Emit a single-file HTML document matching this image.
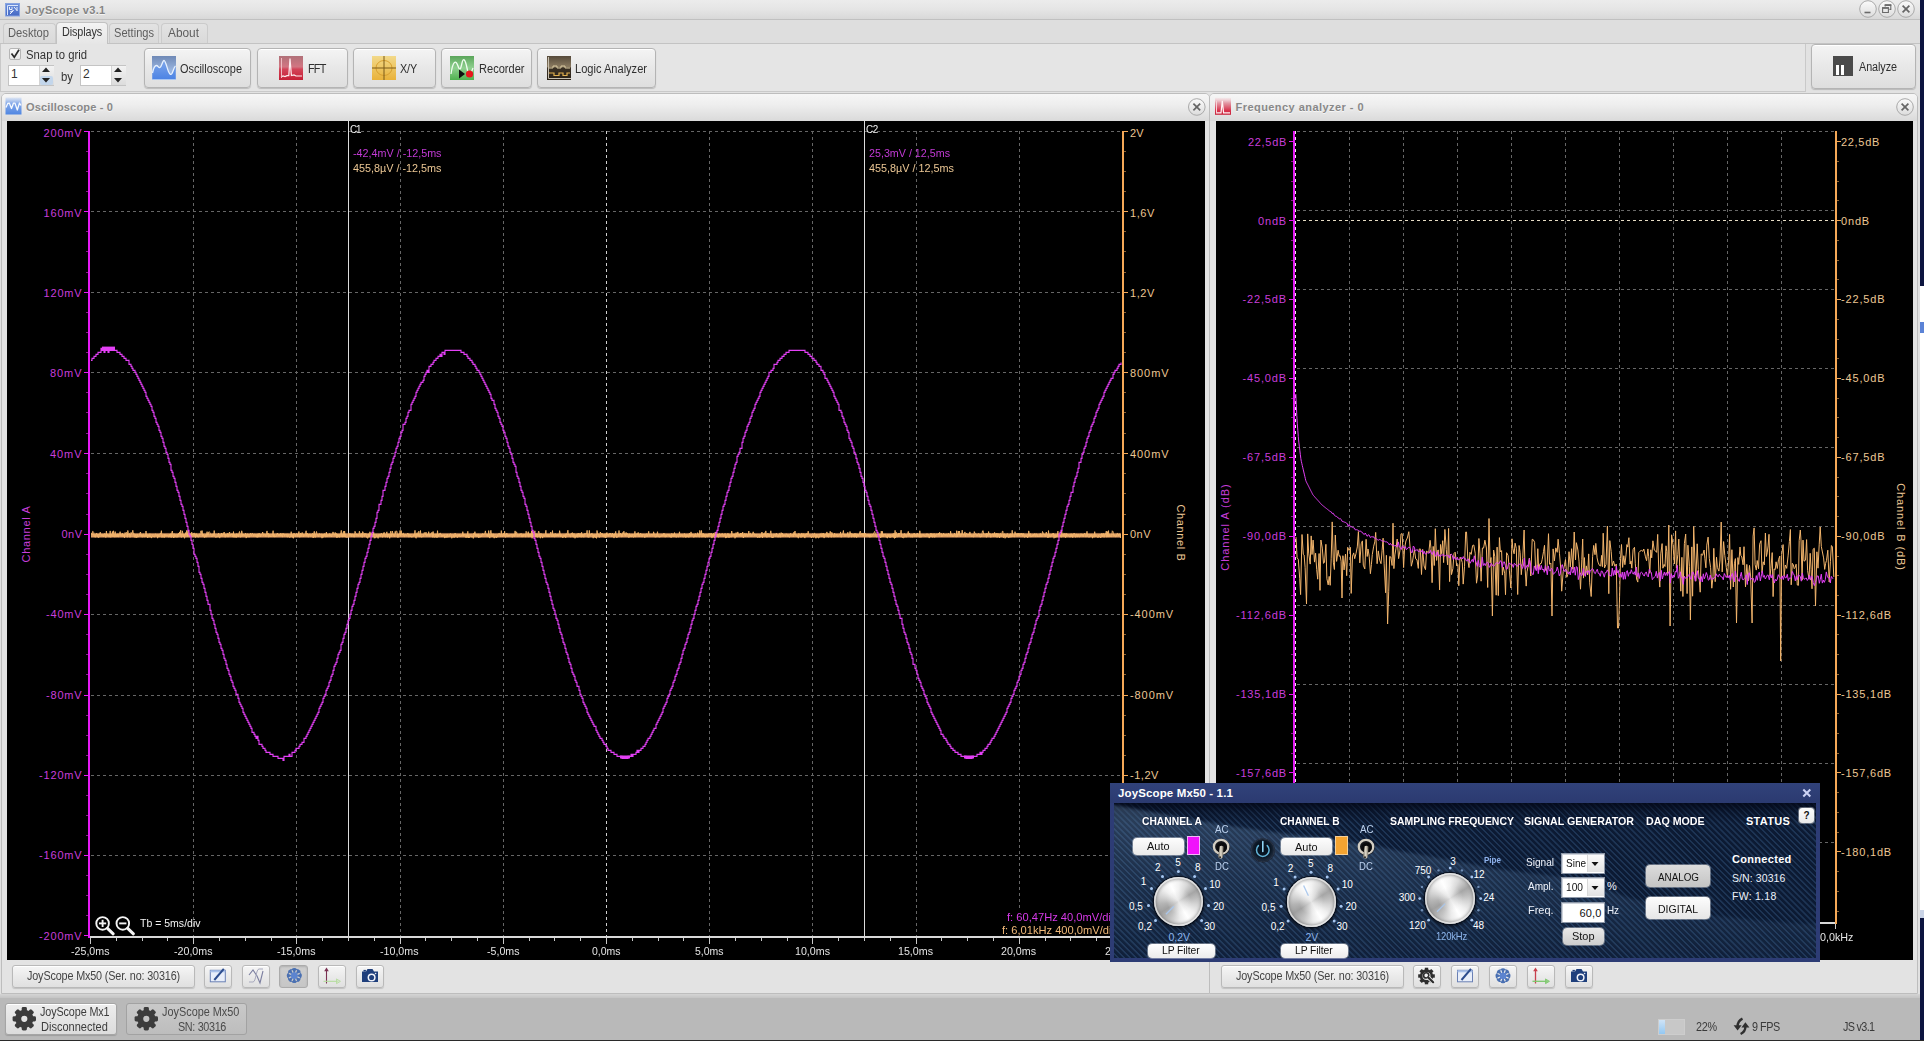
<!DOCTYPE html><html><head><meta charset="utf-8"><title>JoyScope v3.1</title><style>
html,body{margin:0;padding:0;}
body{width:1924px;height:1041px;overflow:hidden;background:#e2e2e2;font-family:"Liberation Sans",sans-serif;position:relative;}
.t{position:absolute;white-space:nowrap;font-family:"Liberation Sans",sans-serif;}
.btn{position:absolute;box-sizing:border-box;border:1px solid #b4b4b4;border-radius:4px;background:linear-gradient(#f4f4f4,#e9e9e9 45%,#dedede);box-shadow:0 1px 1px rgba(0,0,0,.18), inset 0 1px 0 #fff;}
.sbtn{position:absolute;box-sizing:border-box;border:1px solid #b9b9b9;border-radius:3px;background:linear-gradient(#f6f6f6,#eaeaea 50%,#e0e0e0);box-shadow:0 1px 1px rgba(0,0,0,.15), inset 0 1px 0 #fff;}
.pbtn{position:absolute;box-sizing:border-box;border-radius:4px;background:linear-gradient(#fdfdfd,#e9e9e9);box-shadow:0 0 0 1px rgba(255,255,255,.35);}
svg{position:absolute;left:0;top:0;overflow:visible;}
</style></head><body>
<div style="position:absolute;left:1920px;top:0px;width:4px;height:286px;background:#0d1540;"></div>
<div style="position:absolute;left:1920px;top:286px;width:4px;height:631px;background:#fff;"></div>
<div style="position:absolute;left:1920px;top:917px;width:4px;height:124px;background:#0d1540;"></div>
<div style="position:absolute;left:1920px;top:322px;width:4px;height:11px;background:#5b83d6;"></div>
<div style="position:absolute;left:1920px;top:910px;width:4px;height:8px;background:#c9d3e6;"></div>
<div style="position:absolute;left:0px;top:0px;width:1920px;height:1041px;background:#e1e1e1;"></div>
<div style="position:absolute;left:0px;top:0px;width:1920px;height:19px;background:linear-gradient(#ececec,#e5e5e5 50%,#d8d8d8);border-bottom:1px solid #c0c0c0;"></div>
<svg width="1924" height="1041"><defs><linearGradient id="gi" x1="0" y1="0" x2="0" y2="1"><stop offset="0" stop-color="#6f92dc"/><stop offset="1" stop-color="#4468c4"/></linearGradient></defs><rect x="5.5" y="3.5" width="14" height="12.5" fill="url(#gi)" stroke="#88a4e0" stroke-width="1"/><path d="M7.5 15 V5.5 H18" stroke="#dbe6fb" stroke-width="1" fill="none"/><path d="M9.5 7 V9.5 H12 V7 M10 12 L13.5 10.5 L10 14 M14 7 L17 10.5 M17 7 V11" stroke="#eaf1ff" stroke-width="1" fill="none"/></svg>
<div class="t" style="left:25.00px;top:2.80px;font-size:11px;line-height:15px;color:#848484;font-weight:bold;letter-spacing:0.313px;text-shadow:0 1px 0 #f4f4f4;">JoyScope v3.1</div>
<div style="position:absolute;left:0px;top:20px;width:1920px;height:23px;background:#dedede;"></div>
<div style="position:absolute;left:0px;top:43px;width:1920px;height:1px;background:#c3c3c3;"></div>
<div style="position:absolute;left:3px;top:23px;width:53px;height:20px;box-sizing:border-box;border:1px solid #cbcbcb;border-bottom:none;border-radius:4px 4px 0 0;background:linear-gradient(#e3e3e3,#d9d9d9);"></div><div class="t" style="left:8.00px;top:25.00px;font-size:12px;line-height:16px;color:#5e5e5e;transform:scaleX(0.9314);transform-origin:0 50%;">Desktop</div>
<div style="position:absolute;left:109px;top:23px;width:50px;height:20px;box-sizing:border-box;border:1px solid #cbcbcb;border-bottom:none;border-radius:4px 4px 0 0;background:linear-gradient(#e3e3e3,#d9d9d9);"></div><div class="t" style="left:114.00px;top:25.00px;font-size:12px;line-height:16px;color:#5e5e5e;transform:scaleX(0.9225);transform-origin:0 50%;">Settings</div>
<div style="position:absolute;left:161px;top:23px;width:47px;height:20px;box-sizing:border-box;border:1px solid #cbcbcb;border-bottom:none;border-radius:4px 4px 0 0;background:linear-gradient(#e3e3e3,#d9d9d9);"></div><div class="t" style="left:168.00px;top:25.00px;font-size:12px;line-height:16px;color:#5e5e5e;transform:scaleX(0.9885);transform-origin:0 50%;">About</div>
<div style="position:absolute;left:56px;top:22px;width:52px;height:22px;box-sizing:border-box;border:1px solid #c2c2c2;border-bottom:none;border-radius:4px 4px 0 0;background:linear-gradient(#f3f3f3,#e6e6e6);"></div><div class="t" style="left:62.00px;top:24.00px;font-size:12px;line-height:16px;color:#333;letter-spacing:-0.113px;transform:scaleX(0.9000);transform-origin:0 50%;">Displays</div>
<div style="position:absolute;left:0px;top:44px;width:1920px;height:49px;background:#e2e2e2;"></div>
<div style="position:absolute;left:0px;top:44px;width:1806px;height:48px;box-sizing:border-box;border:1px solid #c9c9c9;border-top:none;background:#e5e5e5;"></div>
<div style="position:absolute;left:9px;top:48px;width:12px;height:12px;box-sizing:border-box;border:1px solid #b5b5b5;border-radius:2px;background:linear-gradient(#fafafa,#e9e9e9);"></div>
<svg width="1924" height="1041"><path d="M11.5 53.5 L14.3 57.3 L19 49.8" stroke="#2b2b2b" stroke-width="1.7" fill="none"/></svg>
<div class="t" style="left:26.00px;top:47.00px;font-size:12px;line-height:16px;color:#333;transform:scaleX(0.9427);transform-origin:0 50%;">Snap to grid</div>
<div style="position:absolute;left:8px;top:65px;width:46px;height:21px;box-sizing:border-box;border:1px solid #c4c4c4;background:#fff;"></div><div class="t" style="left:11.00px;top:66.00px;font-size:12px;line-height:16px;color:#333;">1</div><div style="position:absolute;left:39px;top:66px;width:14px;height:19px;background:linear-gradient(#f3f3f3,#dcdcdc);border-left:1px solid #d4d4d4;"></div><svg width="1924" height="1041"><path d="M42 72 L46 67.5 L50 72 Z M42 78 L46 82.5 L50 78 Z" fill="#222"/></svg>
<div style="position:absolute;left:40px;top:76px;width:13px;height:9px;background:#bcd3ee;border-radius:2px;opacity:.8;"></div>
<svg width="1924" height="1041"><path d="M42 78 L46 82.5 L50 78 Z" fill="#222"/></svg>
<div style="position:absolute;left:80px;top:65px;width:46px;height:21px;box-sizing:border-box;border:1px solid #c4c4c4;background:#fff;"></div><div class="t" style="left:83.00px;top:66.00px;font-size:12px;line-height:16px;color:#333;">2</div><div style="position:absolute;left:111px;top:66px;width:14px;height:19px;background:linear-gradient(#f3f3f3,#dcdcdc);border-left:1px solid #d4d4d4;"></div><svg width="1924" height="1041"><path d="M114 72 L118 67.5 L122 72 Z M114 78 L118 82.5 L122 78 Z" fill="#222"/></svg>
<div class="t" style="left:61.00px;top:69.00px;font-size:12px;line-height:16px;color:#333;transform:scaleX(0.9468);transform-origin:0 50%;">by</div>
<div class="btn" style="left:144px;top:48px;width:107px;height:40px;"></div><div class="t" style="left:180.00px;top:61.00px;font-size:12px;line-height:16px;color:#2f2f2f;transform:scaleX(0.9114);transform-origin:0 50%;">Oscilloscope</div><svg width="1924" height="1041"><defs><linearGradient id="io" x1="0" y1="0" x2="0" y2="1"><stop offset="0" stop-color="#6f89b6"/><stop offset=".6" stop-color="#9ab5e0"/><stop offset="1" stop-color="#8fb0e6"/></linearGradient><linearGradient id="io2" x1="0" y1="0" x2="0" y2="1"><stop offset="0" stop-color="#7ea6ea"/><stop offset="1" stop-color="#4a82e4"/></linearGradient></defs><rect x="152" y="56" width="24" height="24" fill="url(#io)"/><path d="M152.5 73 C153.5 68,155 65.5,156.5 65.5 S158.5 68,160 67.5 S162.5 60.5,164 60.5 S167 68,168.5 71.5 S171 75,172 73.5 S174 67,175.5 66 V80 H152.5 Z" fill="url(#io2)"/><path d="M152.5 73 C153.5 68,155 65.5,156.5 65.5 S158.5 68,160 67.5 S162.5 60.5,164 60.5 S167 68,168.5 71.5 S171 75,172 73.5 S174 67,175.5 66" stroke="#e6f1ff" stroke-width="1.3" fill="none"/><path d="M152 79.5 H176" stroke="#a9c6f2" stroke-width="1"/></svg>
<div class="btn" style="left:257px;top:48px;width:91px;height:40px;"></div><div class="t" style="left:307.50px;top:61.00px;font-size:12px;line-height:16px;color:#2f2f2f;letter-spacing:-0.849px;transform:scaleX(0.9000);transform-origin:0 50%;">FFT</div><svg width="1924" height="1041"><defs><linearGradient id="if" x1="0" y1="0" x2="0" y2="1"><stop offset="0" stop-color="#b07078"/><stop offset=".45" stop-color="#d27682"/><stop offset=".55" stop-color="#d24458"/><stop offset="1" stop-color="#c61f36"/></linearGradient></defs><rect x="279" y="56" width="24" height="24" fill="url(#if)"/><path d="M281 77 L283 76 L285 76.6 L287 75.6 L288.8 75.6 L290 58.5 L291.4 75.6 L294 75 L296 76 H302" stroke="#fdeef0" stroke-width="1.2" fill="none"/><path d="M281.5 58 V78" stroke="#efbcc2" stroke-width="1"/></svg>
<div class="btn" style="left:353px;top:48px;width:83px;height:40px;"></div><div class="t" style="left:400.00px;top:61.00px;font-size:12px;line-height:16px;color:#2f2f2f;letter-spacing:-0.151px;transform:scaleX(0.9000);transform-origin:0 50%;">X/Y</div><svg width="1924" height="1041"><defs><linearGradient id="ix" x1="0" y1="0" x2="0" y2="1"><stop offset="0" stop-color="#f2d98a"/><stop offset="1" stop-color="#e9b23a"/></linearGradient></defs><rect x="372" y="56" width="24" height="24" fill="url(#ix)"/><ellipse cx="384" cy="68" rx="8" ry="7.5" stroke="#d8a030" stroke-width="1" fill="none"/><path d="M372 68 H396 M384 56 V80" stroke="#7a5a18" stroke-width="1"/></svg>
<div class="btn" style="left:441px;top:48px;width:91px;height:40px;"></div><div class="t" style="left:478.50px;top:61.00px;font-size:12px;line-height:16px;color:#2f2f2f;transform:scaleX(0.9219);transform-origin:0 50%;">Recorder</div><svg width="1924" height="1041"><defs><linearGradient id="ir" x1="0" y1="0" x2="0" y2="1"><stop offset="0" stop-color="#5aa55a"/><stop offset=".5" stop-color="#8fd08f"/><stop offset="1" stop-color="#4fb24f"/></linearGradient></defs><rect x="450" y="56" width="24" height="24" fill="url(#ir)"/><path d="M451 74 C453 60,456 60,458 66 S461 68,462 63 S465 58,467 68 S470 76,473 68" stroke="#eefcee" stroke-width="1.3" fill="none"/><path d="M459 69.5 L465 74 L459 78.5 Z" fill="#111"/><circle cx="469.5" cy="74" r="3.6" fill="#e8161c"/></svg>
<div class="btn" style="left:537px;top:48px;width:119px;height:40px;"></div><div class="t" style="left:575.00px;top:61.00px;font-size:12px;line-height:16px;color:#2f2f2f;transform:scaleX(0.9225);transform-origin:0 50%;">Logic Analyzer</div><svg width="1924" height="1041"><defs><linearGradient id="il" x1="0" y1="0" x2="0" y2="1"><stop offset="0" stop-color="#55493a"/><stop offset=".45" stop-color="#8a7a60"/><stop offset=".5" stop-color="#3a3024"/><stop offset="1" stop-color="#2a2218"/></linearGradient></defs><rect x="547" y="56" width="24" height="24" fill="url(#il)"/><path d="M549 68 H553 V66 H557 V68 H561 V66 H565 V68 H570" stroke="#d8c8a0" stroke-width="1" fill="none"/><path d="M549 73 H554 V75.5 H559 V73 H563 V75.5 H567 V73 H570" stroke="#e0b050" stroke-width="1.2" fill="none"/><path d="M548.5 57 V78.5 H571" stroke="#c8c0b0" stroke-width="1" fill="none"/></svg>
<div class="btn" style="left:1811px;top:44px;width:105px;height:45px;"></div><div class="t" style="left:1859.00px;top:59.00px;font-size:12px;line-height:16px;color:#2f2f2f;letter-spacing:-0.067px;transform:scaleX(0.9000);transform-origin:0 50%;">Analyze</div>
<div style="position:absolute;left:1833px;top:56px;width:20px;height:20px;background:#4a4a4a;"></div>
<div style="position:absolute;left:1836px;top:65px;width:3px;height:10px;background:#fff;"></div>
<div style="position:absolute;left:1841px;top:65px;width:3px;height:10px;background:#fff;"></div>
<div style="position:absolute;left:1px;top:93px;width:1209px;height:901px;box-sizing:border-box;border:1px solid #bdbdbd;border-radius:5px 5px 0 0;background:#e3e3e3;"></div><div style="position:absolute;left:2px;top:94px;width:1207px;height:27px;border-radius:4px 4px 0 0;background:linear-gradient(#f6f6f6,#eeeeee 40%,#dadada);"></div><svg width="1924" height="1041"><defs><linearGradient id="ios" x1="0" y1="0" x2="0" y2="1"><stop offset="0" stop-color="#9dbdf0" stop-opacity=".25"/><stop offset=".35" stop-color="#86aaea"/><stop offset="1" stop-color="#4f86e2"/></linearGradient></defs><rect x="5.5" y="97.5" width="16" height="17" fill="url(#ios)"/><path d="M6.0 107.5 L7.7 103.5 L9.3 103.1 L11.5 108.5 L13.5 103.1 L15.0 103.1 L17.3 110.0 L19.5 103.0 L21.0 105.5" stroke="#f6faff" stroke-width="1.3" fill="none" stroke-linejoin="round"/></svg><div class="t" style="left:26.00px;top:99.50px;font-size:11px;line-height:15px;color:#888888;font-weight:bold;letter-spacing:0.164px;text-shadow:0 1px 0 #f6f6f6;">Oscilloscope - 0</div>
<div style="position:absolute;left:1209px;top:93px;width:709px;height:901px;box-sizing:border-box;border:1px solid #bdbdbd;border-radius:5px 5px 0 0;background:#e3e3e3;"></div><div style="position:absolute;left:1210px;top:94px;width:707px;height:27px;border-radius:4px 4px 0 0;background:linear-gradient(#f6f6f6,#eeeeee 40%,#dadada);"></div><svg width="1924" height="1041"><defs><linearGradient id="ifs" x1="0" y1="0" x2="0" y2="1"><stop offset="0" stop-color="#f2c0c8" stop-opacity=".2"/><stop offset=".3" stop-color="#e39aa6"/><stop offset=".75" stop-color="#d8324c"/><stop offset="1" stop-color="#c8243c"/></linearGradient></defs><rect x="1215" y="97.8" width="16" height="17" fill="url(#ifs)"/><path d="M1216 112.8 H1221 L1222.3 100.8 L1223.6 112.8 H1230" stroke="#fff4f5" stroke-width="1.2" fill="none"/><path d="M1216.5 100.8 V112.8" stroke="#f7d3d8" stroke-width="1"/></svg><div class="t" style="left:1235.50px;top:99.50px;font-size:11px;line-height:15px;color:#888888;font-weight:bold;letter-spacing:0.449px;text-shadow:0 1px 0 #f6f6f6;">Frequency analyzer - 0</div>
<svg width="1924" height="1041"><defs><linearGradient id="cb" x1="0" y1="0" x2="0" y2="1"><stop offset="0" stop-color="#fbfbfb"/><stop offset="1" stop-color="#dcdcdc"/></linearGradient></defs><circle cx="1868" cy="9" r="8.3" fill="url(#cb)" stroke="#a9a9a9" stroke-width="1"/><path d="M1864.5 12.5 H1870.5" stroke="#6a6a6a" stroke-width="1.6"/><circle cx="1887" cy="9" r="8.3" fill="url(#cb)" stroke="#a9a9a9" stroke-width="1"/><path d="M1885.2 6.6 V5 H1890.8 V9.4 H1889.4 M1882.6 7.9 H1888.4 V12.5 H1882.6 Z" stroke="#6a6a6a" stroke-width="1.1" fill="none"/><path d="M1884.7 5.2 H1891.3 M1882.1 8 H1888.9" stroke="#6a6a6a" stroke-width="1.7"/><circle cx="1906" cy="9" r="8.3" fill="url(#cb)" stroke="#a9a9a9" stroke-width="1"/><path d="M1902.6 5.6 L1909.4 12.4 M1909.4 5.6 L1902.6 12.4" stroke="#666" stroke-width="1.7"/><circle cx="1196.8" cy="107" r="8.3" fill="url(#cb)" stroke="#a9a9a9" stroke-width="1"/><path d="M1193.4 103.6 L1200.2 110.4 M1200.2 103.6 L1193.4 110.4" stroke="#666" stroke-width="1.7"/><circle cx="1905" cy="107" r="8.3" fill="url(#cb)" stroke="#a9a9a9" stroke-width="1"/><path d="M1901.6 103.6 L1908.4 110.4 M1908.4 103.6 L1901.6 110.4" stroke="#666" stroke-width="1.7"/></svg>
<div style="position:absolute;left:7px;top:121px;width:1198px;height:839px;background:#000;"></div>
<div style="position:absolute;left:1216px;top:121px;width:697px;height:839px;background:#000;"></div><svg width="1924" height="1041" shape-rendering="crispEdges"><path d="M91 131.5 H1121" stroke="#666666" stroke-width="1" stroke-dasharray="3 3"/><path d="M91 211.5 H1121" stroke="#666666" stroke-width="1" stroke-dasharray="3 3"/><path d="M91 292.5 H1121" stroke="#666666" stroke-width="1" stroke-dasharray="3 3"/><path d="M91 372.5 H1121" stroke="#666666" stroke-width="1" stroke-dasharray="3 3"/><path d="M91 453.5 H1121" stroke="#666666" stroke-width="1" stroke-dasharray="3 3"/><path d="M91 534.5 H1121" stroke="#666666" stroke-width="1" stroke-dasharray="3 3"/><path d="M91 614.5 H1121" stroke="#666666" stroke-width="1" stroke-dasharray="3 3"/><path d="M91 695.5 H1121" stroke="#666666" stroke-width="1" stroke-dasharray="3 3"/><path d="M91 775.5 H1121" stroke="#666666" stroke-width="1" stroke-dasharray="3 3"/><path d="M91 855.5 H1121" stroke="#666666" stroke-width="1" stroke-dasharray="3 3"/><path d="M193.5 131 V937" stroke="#666666" stroke-width="1" stroke-dasharray="3 3"/><path d="M296.5 131 V937" stroke="#666666" stroke-width="1" stroke-dasharray="3 3"/><path d="M400.5 131 V937" stroke="#666666" stroke-width="1" stroke-dasharray="3 3"/><path d="M503.5 131 V937" stroke="#666666" stroke-width="1" stroke-dasharray="3 3"/><path d="M606.5 131 V937" stroke="#cfcfcf" stroke-width="1" stroke-dasharray="3 3"/><path d="M709.5 131 V937" stroke="#666666" stroke-width="1" stroke-dasharray="3 3"/><path d="M812.5 131 V937" stroke="#666666" stroke-width="1" stroke-dasharray="3 3"/><path d="M916.5 131 V937" stroke="#666666" stroke-width="1" stroke-dasharray="3 3"/><path d="M1019.5 131 V937" stroke="#666666" stroke-width="1" stroke-dasharray="3 3"/><rect x="90" y="936" width="1033" height="2" fill="#d8d8d8"/><rect x="90" y="938" width="1" height="6" fill="#c8c8c8"/><rect x="116" y="938" width="1" height="3" fill="#c8c8c8"/><rect x="142" y="938" width="1" height="3" fill="#c8c8c8"/><rect x="167" y="938" width="1" height="3" fill="#c8c8c8"/><rect x="193" y="938" width="1" height="6" fill="#c8c8c8"/><rect x="219" y="938" width="1" height="3" fill="#c8c8c8"/><rect x="245" y="938" width="1" height="3" fill="#c8c8c8"/><rect x="271" y="938" width="1" height="3" fill="#c8c8c8"/><rect x="296" y="938" width="1" height="6" fill="#c8c8c8"/><rect x="322" y="938" width="1" height="3" fill="#c8c8c8"/><rect x="348" y="938" width="1" height="3" fill="#c8c8c8"/><rect x="374" y="938" width="1" height="3" fill="#c8c8c8"/><rect x="400" y="938" width="1" height="6" fill="#c8c8c8"/><rect x="425" y="938" width="1" height="3" fill="#c8c8c8"/><rect x="451" y="938" width="1" height="3" fill="#c8c8c8"/><rect x="477" y="938" width="1" height="3" fill="#c8c8c8"/><rect x="503" y="938" width="1" height="6" fill="#c8c8c8"/><rect x="529" y="938" width="1" height="3" fill="#c8c8c8"/><rect x="554" y="938" width="1" height="3" fill="#c8c8c8"/><rect x="580" y="938" width="1" height="3" fill="#c8c8c8"/><rect x="606" y="938" width="1" height="6" fill="#c8c8c8"/><rect x="632" y="938" width="1" height="3" fill="#c8c8c8"/><rect x="658" y="938" width="1" height="3" fill="#c8c8c8"/><rect x="683" y="938" width="1" height="3" fill="#c8c8c8"/><rect x="709" y="938" width="1" height="6" fill="#c8c8c8"/><rect x="735" y="938" width="1" height="3" fill="#c8c8c8"/><rect x="761" y="938" width="1" height="3" fill="#c8c8c8"/><rect x="787" y="938" width="1" height="3" fill="#c8c8c8"/><rect x="812" y="938" width="1" height="6" fill="#c8c8c8"/><rect x="838" y="938" width="1" height="3" fill="#c8c8c8"/><rect x="864" y="938" width="1" height="3" fill="#c8c8c8"/><rect x="890" y="938" width="1" height="3" fill="#c8c8c8"/><rect x="916" y="938" width="1" height="6" fill="#c8c8c8"/><rect x="941" y="938" width="1" height="3" fill="#c8c8c8"/><rect x="967" y="938" width="1" height="3" fill="#c8c8c8"/><rect x="993" y="938" width="1" height="3" fill="#c8c8c8"/><rect x="1019" y="938" width="1" height="6" fill="#c8c8c8"/><rect x="1045" y="938" width="1" height="3" fill="#c8c8c8"/><rect x="1070" y="938" width="1" height="3" fill="#c8c8c8"/><rect x="1096" y="938" width="1" height="3" fill="#c8c8c8"/><rect x="1122" y="938" width="1" height="6" fill="#c8c8c8"/><rect x="88" y="131" width="2" height="807" fill="#e61af5"/><rect x="84" y="131" width="4" height="1" fill="#e61af5"/><rect x="86" y="151" width="2" height="1" fill="#8a1890"/><rect x="86" y="171" width="2" height="1" fill="#8a1890"/><rect x="86" y="191" width="2" height="1" fill="#8a1890"/><rect x="84" y="211" width="4" height="1" fill="#e61af5"/><rect x="86" y="231" width="2" height="1" fill="#8a1890"/><rect x="86" y="251" width="2" height="1" fill="#8a1890"/><rect x="86" y="272" width="2" height="1" fill="#8a1890"/><rect x="84" y="292" width="4" height="1" fill="#e61af5"/><rect x="86" y="312" width="2" height="1" fill="#8a1890"/><rect x="86" y="332" width="2" height="1" fill="#8a1890"/><rect x="86" y="352" width="2" height="1" fill="#8a1890"/><rect x="84" y="372" width="4" height="1" fill="#e61af5"/><rect x="86" y="392" width="2" height="1" fill="#8a1890"/><rect x="86" y="412" width="2" height="1" fill="#8a1890"/><rect x="86" y="433" width="2" height="1" fill="#8a1890"/><rect x="84" y="453" width="4" height="1" fill="#e61af5"/><rect x="86" y="473" width="2" height="1" fill="#8a1890"/><rect x="86" y="493" width="2" height="1" fill="#8a1890"/><rect x="86" y="514" width="2" height="1" fill="#8a1890"/><rect x="84" y="534" width="4" height="1" fill="#e61af5"/><rect x="86" y="554" width="2" height="1" fill="#8a1890"/><rect x="86" y="574" width="2" height="1" fill="#8a1890"/><rect x="86" y="594" width="2" height="1" fill="#8a1890"/><rect x="84" y="614" width="4" height="1" fill="#e61af5"/><rect x="86" y="634" width="2" height="1" fill="#8a1890"/><rect x="86" y="654" width="2" height="1" fill="#8a1890"/><rect x="86" y="674" width="2" height="1" fill="#8a1890"/><rect x="84" y="695" width="4" height="1" fill="#e61af5"/><rect x="86" y="715" width="2" height="1" fill="#8a1890"/><rect x="86" y="735" width="2" height="1" fill="#8a1890"/><rect x="86" y="755" width="2" height="1" fill="#8a1890"/><rect x="84" y="775" width="4" height="1" fill="#e61af5"/><rect x="86" y="795" width="2" height="1" fill="#8a1890"/><rect x="86" y="815" width="2" height="1" fill="#8a1890"/><rect x="86" y="835" width="2" height="1" fill="#8a1890"/><rect x="84" y="855" width="4" height="1" fill="#e61af5"/><rect x="86" y="875" width="2" height="1" fill="#8a1890"/><rect x="86" y="895" width="2" height="1" fill="#8a1890"/><rect x="86" y="915" width="2" height="1" fill="#8a1890"/><rect x="84" y="935" width="4" height="1" fill="#e61af5"/><rect x="1122" y="131" width="2" height="807" fill="#f4a857"/><rect x="1124" y="131" width="4" height="1" fill="#f4a857"/><rect x="1124" y="151" width="2" height="1" fill="#8e6434"/><rect x="1124" y="171" width="2" height="1" fill="#8e6434"/><rect x="1124" y="191" width="2" height="1" fill="#8e6434"/><rect x="1124" y="211" width="4" height="1" fill="#f4a857"/><rect x="1124" y="231" width="2" height="1" fill="#8e6434"/><rect x="1124" y="251" width="2" height="1" fill="#8e6434"/><rect x="1124" y="272" width="2" height="1" fill="#8e6434"/><rect x="1124" y="292" width="4" height="1" fill="#f4a857"/><rect x="1124" y="312" width="2" height="1" fill="#8e6434"/><rect x="1124" y="332" width="2" height="1" fill="#8e6434"/><rect x="1124" y="352" width="2" height="1" fill="#8e6434"/><rect x="1124" y="372" width="4" height="1" fill="#f4a857"/><rect x="1124" y="392" width="2" height="1" fill="#8e6434"/><rect x="1124" y="412" width="2" height="1" fill="#8e6434"/><rect x="1124" y="433" width="2" height="1" fill="#8e6434"/><rect x="1124" y="453" width="4" height="1" fill="#f4a857"/><rect x="1124" y="473" width="2" height="1" fill="#8e6434"/><rect x="1124" y="493" width="2" height="1" fill="#8e6434"/><rect x="1124" y="514" width="2" height="1" fill="#8e6434"/><rect x="1124" y="534" width="4" height="1" fill="#f4a857"/><rect x="1124" y="554" width="2" height="1" fill="#8e6434"/><rect x="1124" y="574" width="2" height="1" fill="#8e6434"/><rect x="1124" y="594" width="2" height="1" fill="#8e6434"/><rect x="1124" y="614" width="4" height="1" fill="#f4a857"/><rect x="1124" y="634" width="2" height="1" fill="#8e6434"/><rect x="1124" y="654" width="2" height="1" fill="#8e6434"/><rect x="1124" y="674" width="2" height="1" fill="#8e6434"/><rect x="1124" y="695" width="4" height="1" fill="#f4a857"/><rect x="1124" y="715" width="2" height="1" fill="#8e6434"/><rect x="1124" y="735" width="2" height="1" fill="#8e6434"/><rect x="1124" y="755" width="2" height="1" fill="#8e6434"/><rect x="1124" y="775" width="4" height="1" fill="#f4a857"/><rect x="1124" y="795" width="2" height="1" fill="#8e6434"/><rect x="1124" y="815" width="2" height="1" fill="#8e6434"/><rect x="1124" y="835" width="2" height="1" fill="#8e6434"/><rect x="1124" y="855" width="4" height="1" fill="#f4a857"/><rect x="1124" y="875" width="2" height="1" fill="#8e6434"/><rect x="1124" y="895" width="2" height="1" fill="#8e6434"/><rect x="1124" y="915" width="2" height="1" fill="#8e6434"/><rect x="1124" y="935" width="4" height="1" fill="#f4a857"/><rect x="348" y="121" width="1" height="816" fill="#dcdcdc"/><rect x="864" y="121" width="1" height="816" fill="#dcdcdc"/></svg>
<svg width="1924" height="1041"><rect x="91" y="533.4" width="1030" height="4" fill="#f3b56c" opacity=".9"/><rect x="91" y="532.8" width="1030" height="5.2" fill="#f09a78" opacity=".22"/><polyline points="91.0 533.7 91.5 533.3 92.1 534.6 92.6 531.4 93.2 531.6 93.7 532.5 94.3 536.6 94.8 537.1 95.4 537.2 95.9 534.7 96.5 533.2 97.0 534.3 97.6 536.9 98.1 536.6 98.7 537.7 99.2 534.6 99.8 533.3 100.3 532.2 100.9 534.9 101.4 535.6 102.0 534.3 102.5 536.1 103.1 535.5 103.6 536.9 104.2 534.3 104.7 533.5 105.3 536.3 105.8 537.5 106.4 531.0 106.9 535.5 107.5 534.4 108.0 535.6 108.6 535.0 109.1 537.2 109.7 535.9 110.2 530.9 110.8 537.4 111.3 534.3 111.9 535.9 112.4 531.5 113.0 536.9 113.5 530.8 114.1 537.1 114.6 536.8 115.2 531.6 115.7 536.9 116.3 536.8 116.8 534.8 117.4 536.9 117.9 533.7 118.5 537.1 119.0 535.1 119.6 534.2 120.1 531.7 120.7 535.5 121.2 536.0 121.8 535.7 122.3 533.2 122.9 536.4 123.4 536.5 124.0 534.8 124.5 537.8 125.1 532.5 125.6 533.7 126.2 533.2 126.7 532.3 127.3 537.3 127.8 530.5 128.4 533.7 128.9 534.5 129.5 533.5 130.0 537.4 130.6 535.1 131.1 532.4 131.7 534.2 132.2 533.7 132.8 530.3 133.3 533.6 133.9 533.1 134.4 537.3 135.0 536.1 135.5 534.6 136.1 538.0 136.6 536.4 137.2 534.0 137.8 537.3 138.3 536.5 138.9 536.3 139.4 535.3 140.0 533.1 140.5 532.0 141.1 536.0 141.6 535.0 142.2 537.3 142.7 534.6 143.3 534.0 143.8 537.0 144.4 537.0 144.9 535.1 145.5 536.5 146.0 531.0 146.6 536.4 147.1 535.1 147.7 538.0 148.2 536.5 148.8 534.7 149.3 537.2 149.9 533.7 150.4 537.0 151.0 536.5 151.5 538.1 152.1 535.9 152.6 535.4 153.2 536.7 153.7 535.9 154.3 537.1 154.8 536.8 155.4 533.9 155.9 534.3 156.5 535.6 157.0 534.8 157.6 538.2 158.1 535.0 158.7 537.0 159.2 537.0 159.8 535.3 160.3 533.1 160.9 533.8 161.4 530.7 162.0 537.5 162.5 535.4 163.1 535.3 163.6 536.5 164.2 537.7 164.7 534.2 165.3 535.2 165.8 536.3 166.4 535.0 166.9 535.2 167.5 536.0 168.0 535.3 168.6 537.1 169.1 536.9 169.7 534.1 170.2 537.2 170.8 533.6 171.3 537.5 171.9 532.1 172.4 531.0 173.0 536.9 173.5 537.9 174.1 533.6 174.6 537.3 175.2 537.2 175.7 535.1 176.3 536.7 176.8 537.4 177.4 534.5 177.9 537.2 178.5 533.1 179.0 534.9 179.6 531.9 180.1 535.3 180.7 530.2 181.2 537.3 181.8 537.2 182.3 530.8 182.9 533.6 183.4 537.0 184.0 534.1 184.5 538.3 185.1 536.1 185.6 532.6 186.2 534.9 186.7 530.4 187.3 536.5 187.8 530.6 188.4 530.5 188.9 534.5 189.5 537.1 190.0 533.6 190.6 534.0 191.1 537.0 191.7 532.2 192.2 534.3 192.8 534.3 193.3 533.8 193.9 533.1 194.4 533.1 195.0 535.4 195.5 537.5 196.1 533.5 196.6 534.9 197.2 536.7 197.7 535.2 198.3 537.3 198.8 536.7 199.4 535.8 199.9 534.5 200.5 532.4 201.0 530.8 201.6 533.7 202.1 530.6 202.7 536.0 203.2 534.1 203.8 535.0 204.3 537.5 204.9 537.2 205.4 535.4 206.0 537.2 206.5 534.6 207.1 531.7 207.6 535.2 208.2 535.2 208.7 532.0 209.3 531.7 209.8 532.6 210.4 534.0 210.9 535.3 211.5 535.9 212.0 536.9 212.6 534.4 213.1 533.7 213.7 535.8 214.2 530.6 214.8 535.8 215.3 536.6 215.9 537.6 216.4 536.7 217.0 536.6 217.5 536.9 218.1 536.1 218.6 533.1 219.2 537.3 219.7 538.1 220.3 535.8 220.8 536.0 221.4 533.0 221.9 536.3 222.5 535.4 223.0 533.3 223.6 534.1 224.1 532.0 224.7 533.9 225.2 537.3 225.8 534.7 226.3 536.0 226.9 535.7 227.4 533.3 228.0 537.1 228.5 534.3 229.1 533.1 229.6 532.0 230.2 536.0 230.7 534.3 231.3 535.0 231.8 533.5 232.4 533.9 232.9 537.1 233.5 531.6 234.0 537.3 234.6 534.2 235.1 537.2 235.7 535.6 236.2 537.6 236.8 533.6 237.3 535.2 237.9 536.1 238.4 536.9 239.0 533.1 239.5 531.5 240.1 534.3 240.6 537.3 241.2 536.7 241.7 530.8 242.3 533.5 242.8 536.1 243.4 534.3 243.9 534.7 244.5 535.6 245.0 534.9 245.6 533.2 246.1 538.1 246.7 537.1 247.2 534.2 247.8 533.8 248.3 537.2 248.9 536.6 249.4 537.0 250.0 535.4 250.5 533.2 251.1 535.0 251.6 535.8 252.2 533.2 252.7 533.6 253.3 534.5 253.8 536.3 254.4 534.1 254.9 534.3 255.5 534.7 256.0 537.0 256.6 537.0 257.1 534.0 257.7 537.4 258.2 533.6 258.8 536.9 259.3 533.4 259.9 534.1 260.4 536.9 261.0 534.8 261.5 535.3 262.1 534.5 262.6 532.0 263.2 533.6 263.7 535.8 264.3 534.0 264.8 534.1 265.4 535.0 265.9 536.7 266.5 533.1 267.0 530.9 267.6 535.1 268.1 533.0 268.7 537.1 269.2 536.8 269.8 534.1 270.3 537.0 270.9 536.0 271.4 536.2 272.0 536.4 272.5 535.4 273.1 530.7 273.6 537.0 274.2 534.3 274.7 537.1 275.3 536.1 275.8 536.8 276.4 535.6 276.9 534.0 277.5 533.0 278.0 535.0 278.6 535.8 279.1 535.1 279.7 534.1 280.2 536.1 280.8 533.1 281.3 536.0 281.9 534.1 282.4 537.1 283.0 533.2 283.5 534.9 284.1 533.9 284.6 536.3 285.2 533.9 285.7 534.4 286.3 534.0 286.8 536.3 287.4 537.2 287.9 533.8 288.5 534.8 289.0 537.2 289.6 537.4 290.1 537.3 290.7 536.8 291.2 531.7 291.8 536.9 292.3 537.4 292.9 534.4 293.4 538.3 294.0 533.1 294.5 534.7 295.1 534.5 295.6 536.7 296.2 534.5 296.7 533.5 297.3 533.9 297.8 536.6 298.4 534.9 298.9 531.5 299.5 537.0 300.0 537.3 300.6 533.1 301.1 536.6 301.7 533.2 302.2 532.5 302.8 534.1 303.3 537.0 303.9 534.2 304.4 535.7 305.0 536.2 305.5 534.2 306.1 530.8 306.6 535.8 307.2 533.1 307.7 535.1 308.3 537.2 308.8 534.1 309.4 535.2 309.9 533.8 310.5 536.2 311.0 536.4 311.6 534.4 312.1 534.6 312.7 533.3 313.2 538.0 313.8 533.3 314.3 531.3 314.9 537.3 315.4 537.3 316.0 533.4 316.5 531.5 317.1 535.0 317.6 534.8 318.2 536.0 318.7 536.7 319.3 533.5 319.8 534.3 320.4 534.6 320.9 533.9 321.5 534.1 322.0 538.2 322.6 534.4 323.1 537.4 323.7 534.0 324.2 535.9 324.8 533.5 325.3 536.6 325.9 537.0 326.4 532.0 327.0 537.0 327.5 535.6 328.1 534.6 328.6 535.0 329.2 536.4 329.7 533.5 330.3 535.7 330.8 534.6 331.4 537.0 331.9 535.6 332.5 533.9 333.0 531.9 333.6 533.8 334.1 533.9 334.7 535.4 335.2 532.4 335.8 535.4 336.3 533.4 336.9 537.9 337.4 534.2 338.0 537.2 338.5 535.5 339.1 534.8 339.6 537.4 340.2 533.9 340.7 533.9 341.3 530.4 341.8 536.6 342.4 536.9 342.9 533.7 343.5 531.3 344.0 537.0 344.6 531.1 345.1 535.2 345.7 537.2 346.2 537.1 346.8 537.5 347.3 537.3 347.9 536.9 348.4 537.3 349.0 533.2 349.5 534.7 350.1 535.7 350.6 533.7 351.2 534.0 351.7 536.7 352.3 533.8 352.8 534.8 353.4 534.7 353.9 537.1 354.5 536.9 355.0 531.3 355.6 533.2 356.1 533.5 356.7 535.4 357.2 534.3 357.8 535.6 358.3 535.9 358.9 534.9 359.4 531.2 360.0 534.0 360.5 536.4 361.1 533.8 361.6 533.5 362.2 537.4 362.7 531.6 363.3 533.2 363.8 533.4 364.4 536.4 364.9 533.2 365.5 534.7 366.0 533.6 366.6 537.4 367.1 536.6 367.7 538.4 368.2 537.2 368.8 533.7 369.3 537.1 369.9 531.8 370.4 533.7 371.0 534.2 371.5 533.6 372.1 537.0 372.6 534.2 373.2 534.4 373.7 532.2 374.3 538.3 374.8 536.9 375.4 538.0 375.9 537.6 376.5 534.6 377.0 535.4 377.6 536.9 378.1 538.4 378.7 534.7 379.2 534.2 379.8 535.5 380.3 536.4 380.9 533.8 381.4 533.2 382.0 534.1 382.5 537.3 383.1 535.9 383.6 533.0 384.2 532.3 384.7 534.9 385.3 536.9 385.8 537.1 386.4 533.1 386.9 531.8 387.5 537.3 388.0 535.6 388.6 533.9 389.1 535.1 389.7 538.3 390.2 533.7 390.8 531.1 391.3 536.4 391.9 534.2 392.4 531.1 393.0 534.5 393.5 535.0 394.1 536.2 394.6 537.0 395.2 531.4 395.7 534.0 396.3 530.8 396.8 531.3 397.4 533.6 397.9 537.7 398.5 535.8 399.0 533.8 399.6 534.3 400.1 530.5 400.7 536.1 401.2 530.6 401.8 535.0 402.3 535.0 402.9 533.5 403.4 533.2 404.0 536.3 404.5 536.7 405.1 534.2 405.6 534.9 406.2 535.3 406.7 535.8 407.3 534.0 407.8 533.1 408.4 534.0 408.9 537.2 409.5 534.4 410.0 534.4 410.6 537.0 411.1 536.0 411.7 537.3 412.2 536.7 412.8 536.8 413.3 536.2 413.9 534.4 414.4 535.7 415.0 530.4 415.5 536.7 416.1 538.3 416.6 533.6 417.2 532.6 417.7 535.8 418.3 536.2 418.8 531.2 419.4 536.6 419.9 536.9 420.5 530.5 421.0 537.2 421.6 537.0 422.1 536.8 422.7 536.6 423.2 536.6 423.8 534.3 424.3 532.5 424.9 533.9 425.4 534.9 426.0 532.1 426.5 536.1 427.1 534.4 427.6 535.2 428.2 535.7 428.7 531.7 429.3 536.4 429.8 536.1 430.4 534.0 430.9 533.4 431.5 533.7 432.0 532.2 432.6 537.3 433.1 531.5 433.7 536.5 434.2 537.5 434.8 536.7 435.3 537.2 435.9 533.9 436.4 535.2 437.0 537.8 437.5 530.7 438.1 536.5 438.6 534.6 439.2 534.7 439.7 533.4 440.3 533.1 440.8 534.2 441.4 535.2 441.9 536.9 442.5 535.0 443.0 536.3 443.6 535.8 444.1 534.4 444.7 538.1 445.2 536.3 445.8 537.4 446.3 535.5 446.9 537.5 447.4 534.0 448.0 537.2 448.5 536.7 449.1 537.0 449.6 534.4 450.2 533.7 450.7 533.8 451.3 536.2 451.8 538.3 452.4 537.4 452.9 536.5 453.5 534.9 454.0 537.8 454.6 537.1 455.1 533.1 455.7 536.5 456.2 535.2 456.8 535.0 457.3 537.7 457.9 536.3 458.4 534.9 459.0 536.3 459.5 534.0 460.1 536.9 460.6 536.1 461.2 536.0 461.7 535.0 462.3 535.8 462.8 531.7 463.4 536.1 463.9 534.1 464.5 535.0 465.0 534.8 465.6 537.1 466.1 537.8 466.7 534.7 467.2 537.3 467.8 531.3 468.3 538.0 468.9 535.3 469.4 537.7 470.0 536.2 470.5 535.8 471.1 535.3 471.6 537.2 472.2 536.0 472.7 536.4 473.3 538.4 473.8 533.2 474.4 534.8 474.9 531.7 475.5 536.1 476.0 534.2 476.6 536.3 477.1 535.3 477.7 536.5 478.2 533.9 478.8 538.0 479.3 535.8 479.9 535.5 480.4 537.2 481.0 535.8 481.5 536.6 482.1 534.3 482.6 533.6 483.2 534.6 483.7 534.2 484.3 534.1 484.8 533.8 485.4 530.9 485.9 534.1 486.5 535.1 487.0 535.8 487.6 534.6 488.1 536.8 488.7 530.6 489.2 536.4 489.8 538.1 490.3 533.1 490.9 530.3 491.4 534.1 492.0 536.9 492.5 536.4 493.1 533.7 493.6 536.5 494.2 538.2 494.7 536.4 495.3 536.9 495.8 536.7 496.4 537.9 496.9 536.3 497.5 536.9 498.0 534.2 498.6 533.6 499.1 533.3 499.7 533.6 500.2 535.2 500.8 536.8 501.3 530.6 501.9 535.5 502.4 536.7 503.0 534.8 503.5 533.3 504.1 535.8 504.6 531.2 505.2 537.1 505.7 537.3 506.3 535.1 506.8 533.1 507.4 535.8 507.9 536.8 508.5 535.1 509.0 536.4 509.6 534.9 510.1 535.4 510.7 534.3 511.2 534.8 511.8 534.2 512.3 537.3 512.9 536.5 513.4 534.4 514.0 535.6 514.5 536.5 515.1 530.9 515.6 535.4 516.2 531.9 516.7 532.2 517.3 535.7 517.8 536.5 518.4 535.7 518.9 535.8 519.5 535.6 520.0 533.9 520.6 535.0 521.1 533.4 521.7 536.8 522.2 537.0 522.8 534.6 523.3 536.5 523.9 534.1 524.4 534.9 525.0 534.9 525.5 537.1 526.1 531.3 526.6 532.4 527.2 535.5 527.7 535.0 528.3 531.7 528.8 537.1 529.4 535.1 529.9 533.4 530.5 533.9 531.0 536.7 531.6 531.0 532.1 538.3 532.7 530.5 533.2 536.7 533.8 534.1 534.3 533.8 534.9 530.8 535.4 536.8 536.0 533.4 536.5 536.1 537.1 537.1 537.6 537.2 538.2 533.1 538.7 531.1 539.3 533.4 539.8 536.2 540.4 538.2 540.9 533.3 541.5 535.5 542.0 536.0 542.6 538.1 543.1 535.8 543.7 534.8 544.2 536.5 544.8 536.5 545.3 534.3 545.9 530.3 546.4 536.6 547.0 535.7 547.5 536.7 548.1 534.4 548.6 536.9 549.2 536.0 549.7 536.9 550.3 534.2 550.8 532.0 551.4 535.6 551.9 536.9 552.5 530.6 553.0 536.8 553.6 534.2 554.1 536.6 554.7 537.0 555.2 533.4 555.8 536.5 556.3 536.3 556.9 534.0 557.4 536.0 558.0 533.9 558.5 536.3 559.1 535.0 559.6 530.7 560.2 534.0 560.7 536.9 561.3 535.3 561.8 535.6 562.4 537.0 562.9 537.9 563.5 535.5 564.0 535.3 564.6 536.8 565.1 534.6 565.7 537.8 566.2 533.7 566.8 534.5 567.3 533.1 567.9 530.2 568.4 535.1 569.0 534.2 569.5 534.9 570.1 536.4 570.6 537.2 571.2 533.2 571.7 533.8 572.3 532.6 572.8 536.8 573.4 537.2 573.9 533.3 574.5 534.7 575.0 538.3 575.6 535.5 576.1 537.2 576.7 534.7 577.2 533.7 577.8 537.4 578.3 533.2 578.9 534.5 579.4 537.0 580.0 533.2 580.5 536.1 581.1 537.3 581.6 532.3 582.2 537.1 582.7 534.3 583.3 536.3 583.8 537.3 584.4 533.5 584.9 533.7 585.5 533.6 586.0 533.1 586.6 533.9 587.1 530.4 587.7 537.1 588.2 536.9 588.8 537.5 589.3 530.4 589.9 535.8 590.4 534.5 591.0 535.1 591.5 533.6 592.1 533.2 592.6 535.4 593.2 538.2 593.7 534.8 594.3 537.2 594.8 534.5 595.4 537.5 595.9 537.0 596.5 538.4 597.0 530.5 597.6 533.9 598.1 534.3 598.7 533.9 599.2 537.4 599.8 537.1 600.3 532.0 600.9 533.3 601.4 534.3 602.0 533.1 602.5 534.5 603.1 536.7 603.6 535.3 604.2 537.4 604.7 534.0 605.2 533.6 605.8 538.0 606.3 533.9 606.9 532.5 607.4 535.2 608.0 533.9 608.5 536.1 609.1 535.6 609.6 533.3 610.2 534.8 610.7 533.2 611.3 534.5 611.8 536.8 612.4 533.1 612.9 535.1 613.5 534.2 614.0 538.1 614.6 533.7 615.1 535.6 615.7 531.4 616.2 535.3 616.8 537.9 617.3 536.8 617.9 536.1 618.4 536.3 619.0 530.5 619.5 535.2 620.1 535.3 620.6 533.1 621.2 534.0 621.7 536.9 622.3 536.6 622.8 532.5 623.4 533.9 623.9 531.2 624.5 535.3 625.0 533.5 625.6 536.2 626.1 532.4 626.7 535.2 627.2 533.5 627.8 533.6 628.3 536.8 628.9 537.7 629.4 533.7 630.0 537.1 630.5 534.9 631.1 535.3 631.6 537.1 632.2 534.5 632.7 534.5 633.3 537.3 633.8 537.0 634.4 536.7 634.9 531.4 635.5 537.1 636.0 534.9 636.6 534.6 637.1 533.3 637.7 535.2 638.2 532.4 638.8 536.4 639.3 535.8 639.9 536.9 640.4 533.2 641.0 534.2 641.5 534.2 642.1 537.1 642.6 534.1 643.2 534.9 643.7 534.3 644.3 535.8 644.8 537.7 645.4 535.3 645.9 535.1 646.5 533.7 647.0 536.9 647.6 534.8 648.1 534.1 648.7 531.3 649.2 535.7 649.8 535.9 650.3 536.1 650.9 535.4 651.4 535.1 652.0 534.1 652.5 535.3 653.1 535.6 653.6 531.8 654.2 534.0 654.7 535.2 655.3 537.3 655.8 536.4 656.4 536.8 656.9 534.9 657.5 531.7 658.0 536.2 658.6 537.1 659.1 536.3 659.7 537.3 660.2 536.0 660.8 536.7 661.3 535.3 661.9 536.3 662.4 535.1 663.0 536.1 663.5 533.6 664.1 533.0 664.6 535.6 665.2 537.2 665.7 534.8 666.3 536.8 666.8 534.7 667.4 535.0 667.9 534.3 668.5 535.4 669.0 534.4 669.6 536.7 670.1 535.0 670.7 537.2 671.2 537.7 671.8 533.4 672.3 534.4 672.9 536.7 673.4 533.9 674.0 537.0 674.5 532.6 675.1 535.2 675.6 536.4 676.2 537.4 676.7 535.3 677.3 534.7 677.8 535.6 678.4 537.2 678.9 535.3 679.5 531.8 680.0 535.5 680.6 536.9 681.1 535.1 681.7 535.7 682.2 534.5 682.8 536.6 683.3 537.2 683.9 536.6 684.4 533.5 685.0 536.0 685.5 537.4 686.1 534.9 686.6 537.2 687.2 535.2 687.7 537.0 688.3 535.7 688.8 537.4 689.4 533.2 689.9 536.5 690.5 536.0 691.0 531.9 691.6 535.6 692.1 533.9 692.7 535.4 693.2 535.8 693.8 537.4 694.3 534.8 694.9 537.0 695.4 533.5 696.0 537.0 696.5 536.6 697.1 536.5 697.6 532.7 698.2 534.4 698.7 534.6 699.3 537.2 699.8 530.4 700.4 534.5 700.9 534.7 701.5 530.5 702.0 537.2 702.6 535.7 703.1 533.2 703.7 536.8 704.2 537.0 704.8 534.3 705.3 537.2 705.9 537.2 706.4 534.7 707.0 534.0 707.5 536.9 708.1 536.5 708.6 533.8 709.2 533.8 709.7 534.3 710.3 533.5 710.8 534.7 711.4 533.3 711.9 538.1 712.5 534.1 713.0 537.2 713.6 533.2 714.1 534.5 714.7 537.9 715.2 532.0 715.8 533.6 716.3 536.7 716.9 533.7 717.4 536.2 718.0 537.2 718.5 537.2 719.1 534.0 719.6 533.6 720.2 534.1 720.7 535.6 721.3 534.1 721.8 533.9 722.4 533.5 722.9 535.4 723.5 536.4 724.0 535.9 724.6 534.4 725.1 533.4 725.7 538.1 726.2 535.9 726.8 537.7 727.3 535.2 727.9 533.3 728.4 534.0 729.0 537.9 729.5 534.8 730.1 536.4 730.6 536.8 731.2 537.2 731.7 531.0 732.3 534.5 732.8 535.9 733.4 534.1 733.9 534.5 734.5 533.8 735.0 538.3 735.6 536.1 736.1 532.6 736.7 537.0 737.2 534.7 737.8 531.9 738.3 533.8 738.9 535.5 739.4 534.1 740.0 536.0 740.5 533.0 741.1 536.4 741.6 533.2 742.2 535.7 742.7 532.1 743.3 538.0 743.8 537.0 744.4 533.4 744.9 534.7 745.5 536.6 746.0 533.4 746.6 534.9 747.1 536.0 747.7 536.7 748.2 535.0 748.8 531.0 749.3 535.3 749.9 533.6 750.4 533.2 751.0 536.5 751.5 535.4 752.1 535.8 752.6 534.1 753.2 531.8 753.7 533.9 754.3 533.6 754.8 535.9 755.4 534.1 755.9 535.0 756.5 534.5 757.0 536.9 757.6 537.7 758.1 536.6 758.7 536.3 759.2 537.8 759.8 535.0 760.3 536.7 760.9 537.2 761.4 533.9 762.0 532.0 762.5 537.9 763.1 533.5 763.6 535.1 764.2 533.7 764.7 532.7 765.3 536.3 765.8 530.9 766.4 535.5 766.9 537.5 767.5 533.8 768.0 533.0 768.6 535.8 769.1 537.1 769.7 534.1 770.2 533.6 770.8 530.8 771.3 534.3 771.9 537.8 772.4 537.1 773.0 538.0 773.5 536.3 774.1 533.8 774.6 534.4 775.2 535.4 775.7 536.7 776.3 533.2 776.8 535.8 777.4 536.1 777.9 537.2 778.5 535.2 779.0 537.2 779.6 533.4 780.1 533.7 780.7 537.3 781.2 532.6 781.8 533.8 782.3 533.0 782.9 536.8 783.4 534.9 784.0 535.9 784.5 534.9 785.1 534.9 785.6 536.6 786.2 533.7 786.7 534.9 787.3 534.5 787.8 536.8 788.4 535.0 788.9 537.0 789.5 537.3 790.0 535.7 790.6 533.3 791.1 535.7 791.7 535.5 792.2 535.1 792.8 534.3 793.3 536.9 793.9 532.2 794.4 535.0 795.0 531.0 795.5 535.6 796.1 535.3 796.6 534.7 797.2 537.0 797.7 535.4 798.3 538.2 798.8 533.4 799.4 534.1 799.9 535.4 800.5 535.5 801.0 537.6 801.6 533.4 802.1 533.3 802.7 536.8 803.2 536.1 803.8 533.5 804.3 536.2 804.9 538.1 805.4 533.8 806.0 535.5 806.5 533.6 807.1 533.3 807.6 534.6 808.2 531.2 808.7 534.3 809.3 534.9 809.8 535.7 810.4 535.5 810.9 536.8 811.5 538.0 812.0 536.4 812.6 536.6 813.1 537.3 813.7 537.2 814.2 533.2 814.8 533.4 815.3 536.5 815.9 538.3 816.4 534.1 817.0 537.5 817.5 535.6 818.1 536.7 818.6 538.1 819.2 537.6 819.7 536.0 820.3 533.6 820.8 535.4 821.4 536.6 821.9 533.1 822.5 533.7 823.0 536.8 823.6 533.2 824.1 538.1 824.7 534.7 825.2 533.7 825.8 534.7 826.3 535.7 826.9 531.9 827.4 536.9 828.0 533.2 828.5 537.3 829.1 535.5 829.6 534.6 830.2 531.3 830.7 533.1 831.3 537.3 831.8 532.3 832.4 534.2 832.9 535.2 833.5 535.5 834.0 537.2 834.6 533.2 835.1 536.4 835.7 536.4 836.2 535.8 836.8 534.2 837.3 536.8 837.9 536.0 838.4 536.4 839.0 535.2 839.5 534.5 840.1 534.8 840.6 531.9 841.2 537.3 841.7 534.6 842.3 534.0 842.8 533.6 843.4 530.5 843.9 535.0 844.5 534.3 845.0 536.8 845.6 534.4 846.1 535.4 846.7 534.5 847.2 535.6 847.8 532.3 848.3 537.3 848.9 536.4 849.4 536.8 850.0 531.5 850.5 534.2 851.1 533.1 851.6 537.2 852.2 534.0 852.7 533.9 853.3 536.8 853.8 533.9 854.4 537.2 854.9 533.3 855.5 536.9 856.0 533.6 856.6 537.6 857.1 535.8 857.7 533.9 858.2 536.3 858.8 534.8 859.3 534.5 859.9 531.7 860.4 531.1 861.0 535.2 861.5 534.1 862.1 533.1 862.6 535.5 863.2 533.2 863.7 536.2 864.3 533.4 864.8 536.9 865.4 533.4 865.9 534.9 866.5 535.6 867.0 535.9 867.6 534.5 868.1 534.1 868.7 536.4 869.2 534.4 869.8 537.3 870.3 534.2 870.9 537.1 871.4 536.7 872.0 535.9 872.5 534.6 873.1 534.0 873.6 533.4 874.2 532.4 874.7 531.4 875.3 533.8 875.8 534.6 876.4 537.0 876.9 537.1 877.5 536.7 878.0 534.1 878.6 535.2 879.1 534.5 879.7 535.0 880.2 537.0 880.8 537.9 881.3 531.1 881.9 536.8 882.4 531.3 883.0 537.0 883.5 535.8 884.1 534.1 884.6 534.9 885.2 533.9 885.7 535.8 886.3 537.4 886.8 535.5 887.4 538.2 887.9 534.2 888.5 536.6 889.0 534.5 889.6 536.9 890.1 537.9 890.7 535.0 891.2 536.9 891.8 536.9 892.3 536.4 892.9 533.8 893.4 537.4 894.0 533.1 894.5 538.4 895.1 530.4 895.6 538.0 896.2 532.3 896.7 533.4 897.3 537.0 897.8 536.9 898.4 533.1 898.9 536.5 899.5 533.2 900.0 534.0 900.6 533.5 901.1 530.2 901.7 536.9 902.2 537.5 902.8 537.4 903.3 537.9 903.9 538.0 904.4 533.5 905.0 535.2 905.5 534.5 906.1 537.3 906.6 536.2 907.2 533.8 907.7 533.3 908.3 531.4 908.8 535.4 909.4 533.0 909.9 535.9 910.5 535.4 911.0 537.3 911.6 536.2 912.1 534.4 912.7 537.3 913.2 534.7 913.8 533.6 914.3 533.0 914.9 537.1 915.4 535.7 916.0 534.1 916.5 536.9 917.1 536.4 917.6 533.2 918.2 534.4 918.7 535.4 919.3 537.3 919.8 530.8 920.4 535.2 920.9 537.4 921.5 535.8 922.0 534.7 922.6 534.7 923.1 535.7 923.7 534.4 924.2 535.4 924.8 535.7 925.3 537.0 925.9 536.2 926.4 535.1 927.0 533.6 927.5 535.3 928.1 535.3 928.6 534.1 929.2 538.1 929.7 535.8 930.3 536.9 930.8 533.2 931.4 536.7 931.9 533.5 932.5 537.1 933.0 537.3 933.6 535.3 934.1 533.4 934.7 537.4 935.2 535.0 935.8 536.5 936.3 533.7 936.9 534.6 937.4 534.0 938.0 534.5 938.5 533.1 939.1 535.5 939.6 532.3 940.2 534.2 940.7 534.1 941.3 533.4 941.8 536.8 942.4 534.9 942.9 535.7 943.5 533.2 944.0 534.6 944.6 534.3 945.1 535.9 945.7 534.6 946.2 535.5 946.8 533.8 947.3 536.1 947.9 535.9 948.4 533.3 949.0 534.7 949.5 535.2 950.1 536.3 950.6 531.2 951.2 535.0 951.7 534.8 952.3 536.9 952.8 535.2 953.4 536.6 953.9 536.3 954.5 533.2 955.0 535.4 955.6 536.4 956.1 537.1 956.7 530.7 957.2 536.9 957.8 535.5 958.3 531.0 958.9 535.1 959.4 531.0 960.0 535.6 960.5 536.6 961.1 533.6 961.6 535.3 962.2 530.2 962.7 534.2 963.3 534.1 963.8 535.4 964.4 534.8 964.9 531.9 965.5 536.5 966.0 534.1 966.6 533.2 967.1 534.6 967.7 535.2 968.2 534.6 968.8 533.9 969.3 535.4 969.9 531.9 970.4 534.8 971.0 534.4 971.5 536.5 972.1 536.1 972.6 535.6 973.2 537.1 973.7 536.9 974.3 531.6 974.8 533.2 975.4 533.3 975.9 533.8 976.5 535.5 977.0 535.2 977.6 536.0 978.1 533.9 978.7 533.6 979.2 533.9 979.8 536.9 980.3 537.2 980.9 535.9 981.4 537.0 982.0 533.7 982.5 531.0 983.1 530.6 983.6 534.0 984.2 534.4 984.7 533.7 985.3 534.4 985.8 533.7 986.4 537.3 986.9 533.1 987.5 535.8 988.0 535.4 988.6 531.5 989.1 534.9 989.7 533.5 990.2 533.5 990.8 537.4 991.3 535.3 991.9 534.5 992.4 535.2 993.0 533.4 993.5 536.8 994.1 535.4 994.6 532.4 995.2 536.9 995.7 534.0 996.3 533.1 996.8 537.3 997.4 537.2 997.9 533.2 998.5 535.0 999.0 536.3 999.6 538.0 1000.1 533.3 1000.7 533.4 1001.2 536.5 1001.8 535.0 1002.3 531.4 1002.9 531.1 1003.4 537.7 1004.0 534.6 1004.5 533.7 1005.1 538.3 1005.6 536.7 1006.2 535.1 1006.7 536.9 1007.3 533.5 1007.8 535.4 1008.4 537.5 1008.9 537.6 1009.5 534.6 1010.0 537.4 1010.6 533.6 1011.1 536.8 1011.7 536.9 1012.2 530.3 1012.8 536.5 1013.3 536.0 1013.9 536.3 1014.4 537.1 1015.0 531.7 1015.5 534.3 1016.1 533.4 1016.6 534.0 1017.2 536.4 1017.7 533.3 1018.3 535.6 1018.8 533.2 1019.4 536.0 1019.9 534.5 1020.5 535.0 1021.0 533.0 1021.6 534.8 1022.1 533.4 1022.7 536.2 1023.2 533.7 1023.8 533.6 1024.3 537.1 1024.9 537.3 1025.4 536.5 1026.0 535.2 1026.5 537.0 1027.1 535.8 1027.6 537.8 1028.2 536.5 1028.7 530.9 1029.3 533.7 1029.8 536.0 1030.4 533.6 1030.9 537.1 1031.5 536.3 1032.0 536.5 1032.6 534.9 1033.1 536.5 1033.7 534.3 1034.2 535.3 1034.8 533.5 1035.3 536.5 1035.9 536.7 1036.4 533.9 1037.0 534.0 1037.5 537.0 1038.1 536.1 1038.6 536.4 1039.2 536.0 1039.7 536.6 1040.3 533.4 1040.8 536.7 1041.4 535.6 1041.9 536.5 1042.5 531.5 1043.0 532.4 1043.6 534.8 1044.1 535.0 1044.7 533.9 1045.2 536.7 1045.8 534.3 1046.3 532.0 1046.9 534.9 1047.4 536.6 1048.0 537.9 1048.5 530.6 1049.1 537.2 1049.6 534.6 1050.2 536.9 1050.7 536.9 1051.3 535.2 1051.8 535.2 1052.4 533.8 1052.9 533.7 1053.5 533.0 1054.0 538.3 1054.6 536.6 1055.1 534.6 1055.7 537.6 1056.2 535.3 1056.8 537.1 1057.3 535.9 1057.9 531.1 1058.4 537.2 1059.0 535.9 1059.5 534.7 1060.1 536.0 1060.6 535.2 1061.2 537.3 1061.7 530.6 1062.3 535.5 1062.8 536.3 1063.4 536.2 1063.9 533.2 1064.5 533.6 1065.0 536.9 1065.6 537.7 1066.1 533.2 1066.7 536.3 1067.2 534.2 1067.8 534.3 1068.3 534.9 1068.9 535.9 1069.4 536.0 1070.0 537.2 1070.5 536.0 1071.1 533.7 1071.6 536.6 1072.2 534.5 1072.7 537.6 1073.3 533.7 1073.8 533.8 1074.4 533.2 1074.9 534.7 1075.5 537.2 1076.0 537.2 1076.6 533.9 1077.1 534.9 1077.7 537.1 1078.2 534.7 1078.8 534.2 1079.3 537.0 1079.9 536.7 1080.4 536.4 1081.0 533.7 1081.5 535.1 1082.1 536.0 1082.6 534.2 1083.2 537.0 1083.7 534.3 1084.3 534.1 1084.8 533.2 1085.4 535.5 1085.9 537.1 1086.5 534.1 1087.0 531.3 1087.6 536.0 1088.1 536.6 1088.7 537.2 1089.2 537.3 1089.8 536.0 1090.3 534.7 1090.9 536.3 1091.4 534.7 1092.0 534.5 1092.5 538.2 1093.1 535.3 1093.6 537.0 1094.2 537.3 1094.7 531.7 1095.3 536.7 1095.8 535.5 1096.4 535.5 1096.9 536.7 1097.5 536.7 1098.0 537.8 1098.6 535.2 1099.1 537.0 1099.7 536.6 1100.2 536.9 1100.8 537.9 1101.3 535.7 1101.9 533.3 1102.4 536.6 1103.0 533.9 1103.5 533.4 1104.1 537.3 1104.6 534.6 1105.2 533.3 1105.7 534.4 1106.3 531.1 1106.8 537.2 1107.4 531.6 1107.9 536.6 1108.5 530.6 1109.0 537.1 1109.6 534.5 1110.1 535.5 1110.7 536.5 1111.2 536.7 1111.8 535.4 1112.3 530.8 1112.9 531.4 1113.4 533.3 1114.0 536.2 1114.5 534.8 1115.1 535.6 1115.6 536.8 1116.2 536.5 1116.7 534.4 1117.3 533.3 1117.8 533.6 1118.4 536.0 1118.9 535.0 1119.5 533.8 1120.0 534.2 1120.6 538.0" fill="none" stroke="#f3b56c" stroke-width="0.9"/><path d="M91.0 360.4H92.0V358.4H94.0V356.4H96.0V354.4H98.0V352.4H101.0V348.4H102.0V350.4H104.0V352.4H105.0V350.4H108.0V352.4H109.0V350.4H113.0V348.4H114.0V350.4H117.0V352.4H120.0V354.4H122.0V356.4H124.0V358.4H126.0V360.4H129.0V364.4H131.0V366.4H132.0V368.4H133.0V370.4H135.0V372.4H136.0V374.4H137.0V376.4H138.0V378.4H139.0V380.4H140.0V382.4H141.0V384.4H142.0V386.4H143.0V388.4H144.0V390.4H145.0V392.4H146.0V396.4H147.0V398.4H148.0V400.4H149.0V402.4H150.0V404.4H151.0V406.4H152.0V410.4H153.0V412.4H154.0V416.4H155.0V418.4H156.0V422.4H157.0V424.4H158.0V426.4H159.0V430.4H160.0V432.4H161.0V436.4H162.0V438.4H163.0V442.4H164.0V446.4H165.0V448.4H166.0V452.4H167.0V454.4H168.0V458.4H169.0V462.4H170.0V464.4H171.0V470.4H172.0V472.4H173.0V476.4H174.0V478.4H175.0V482.4H176.0V486.4H177.0V490.4H178.0V492.4H179.0V496.4H180.0V500.4H181.0V504.4H182.0V506.4H183.0V510.4H184.0V514.4H185.0V518.4H186.0V522.4H187.0V526.4H188.0V530.4H189.0V534.4H190.0V536.4H191.0V540.4H192.0V544.4H193.0V548.4H194.0V554.4H195.0V556.4H196.0V558.4H197.0V562.4H198.0V566.4H199.0V572.4H200.0V574.4H201.0V578.4H202.0V582.4H203.0V584.4H204.0V588.4H205.0V592.4H206.0V596.4H207.0V600.4H208.0V604.4H210.0V610.4H211.0V614.4H212.0V618.4H213.0V620.4H214.0V624.4H215.0V628.4H216.0V632.4H217.0V634.4H218.0V638.4H219.0V642.4H220.0V644.4H221.0V648.4H222.0V650.4H223.0V654.4H224.0V658.4H225.0V660.4H226.0V664.4H227.0V668.4H228.0V670.4H229.0V674.4H230.0V676.4H231.0V680.4H232.0V682.4H233.0V686.4H234.0V688.4H235.0V690.4H236.0V694.4H238.0V698.4H239.0V702.4H240.0V704.4H241.0V706.4H242.0V708.4H243.0V712.4H244.0V714.4H245.0V716.4H246.0V718.4H247.0V720.4H248.0V722.4H249.0V724.4H250.0V726.4H251.0V728.4H252.0V732.4H254.0V734.4H255.0V736.4H256.0V738.4H257.0V736.4H258.0V740.4H259.0V744.4H262.0V746.4H263.0V748.4H265.0V750.4H266.0V752.4H270.0V754.4H273.0V756.4H278.0V758.4H283.0V760.4H284.0V756.4H289.0V754.4H290.0V756.4H292.0V752.4H295.0V750.4H296.0V748.4H299.0V746.4H300.0V744.4H302.0V742.4H304.0V738.4H306.0V736.4H307.0V734.4H308.0V732.4H309.0V730.4H310.0V728.4H311.0V726.4H312.0V724.4H313.0V722.4H314.0V720.4H315.0V718.4H316.0V716.4H317.0V714.4H318.0V712.4H319.0V708.4H320.0V706.4H321.0V704.4H322.0V702.4H323.0V698.4H324.0V696.4H325.0V694.4H326.0V690.4H327.0V688.4H328.0V686.4H329.0V682.4H330.0V680.4H331.0V676.4H332.0V674.4H333.0V670.4H334.0V666.4H335.0V664.4H336.0V662.4H337.0V658.4H338.0V654.4H339.0V652.4H340.0V650.4H341.0V644.4H342.0V642.4H343.0V638.4H344.0V634.4H345.0V632.4H346.0V628.4H347.0V624.4H348.0V620.4H349.0V618.4H350.0V614.4H351.0V610.4H352.0V606.4H353.0V604.4H354.0V600.4H355.0V596.4H356.0V592.4H357.0V588.4H358.0V584.4H359.0V582.4H360.0V578.4H361.0V574.4H362.0V570.4H363.0V566.4H364.0V562.4H365.0V558.4H366.0V556.4H367.0V552.4H368.0V548.4H369.0V544.4H370.0V540.4H371.0V536.4H372.0V532.4H373.0V528.4H374.0V526.4H375.0V522.4H376.0V518.4H377.0V512.4H378.0V510.4H379.0V504.4H381.0V500.4H382.0V496.4H383.0V490.4H385.0V486.4H386.0V482.4H387.0V478.4H388.0V476.4H389.0V472.4H390.0V468.4H391.0V464.4H392.0V462.4H393.0V458.4H394.0V456.4H395.0V452.4H396.0V448.4H397.0V446.4H398.0V442.4H399.0V438.4H400.0V436.4H401.0V432.4H402.0V430.4H403.0V424.4H405.0V422.4H406.0V418.4H407.0V416.4H408.0V412.4H409.0V410.4H411.0V404.4H412.0V402.4H413.0V400.4H414.0V398.4H415.0V396.4H416.0V392.4H417.0V390.4H418.0V388.4H419.0V386.4H420.0V384.4H421.0V382.4H423.0V380.4H424.0V376.4H425.0V374.4H426.0V372.4H427.0V370.4H428.0V372.4H429.0V366.4H431.0V364.4H433.0V362.4H434.0V360.4H436.0V358.4H438.0V356.4H440.0V354.4H441.0V356.4H442.0V352.4H444.0V354.4H445.0V350.4H461.0V352.4H464.0V354.4H467.0V356.4H468.0V358.4H470.0V360.4H472.0V362.4H473.0V364.4H475.0V366.4H476.0V368.4H477.0V370.4H479.0V372.4H480.0V374.4H481.0V376.4H482.0V378.4H483.0V380.4H484.0V382.4H485.0V384.4H486.0V386.4H487.0V388.4H488.0V390.4H489.0V392.4H490.0V394.4H491.0V398.4H492.0V400.4H494.0V404.4H495.0V408.4H496.0V410.4H497.0V412.4H498.0V416.4H499.0V418.4H500.0V422.4H501.0V424.4H502.0V426.4H503.0V430.4H504.0V432.4H505.0V436.4H506.0V438.4H507.0V442.4H508.0V446.4H509.0V448.4H510.0V452.4H511.0V454.4H512.0V458.4H513.0V462.4H514.0V464.4H515.0V466.4H516.0V472.4H517.0V476.4H518.0V478.4H519.0V482.4H520.0V486.4H521.0V490.4H522.0V492.4H523.0V496.4H524.0V498.4H525.0V504.4H526.0V506.4H527.0V510.4H528.0V514.4H529.0V518.4H530.0V522.4H531.0V526.4H532.0V530.4H533.0V532.4H534.0V538.4H535.0V540.4H536.0V544.4H537.0V548.4H538.0V552.4H539.0V556.4H540.0V558.4H541.0V562.4H542.0V566.4H543.0V570.4H544.0V574.4H545.0V578.4H546.0V582.4H547.0V584.4H548.0V588.4H549.0V592.4H550.0V596.4H551.0V600.4H552.0V604.4H553.0V608.4H554.0V610.4H555.0V614.4H556.0V618.4H557.0V620.4H558.0V624.4H559.0V628.4H560.0V632.4H561.0V634.4H562.0V638.4H563.0V642.4H564.0V644.4H565.0V648.4H566.0V652.4H567.0V654.4H568.0V658.4H569.0V662.4H570.0V664.4H571.0V668.4H572.0V672.4H573.0V674.4H574.0V676.4H575.0V680.4H576.0V682.4H577.0V686.4H579.0V690.4H580.0V694.4H581.0V696.4H582.0V698.4H583.0V702.4H584.0V704.4H585.0V706.4H586.0V708.4H587.0V712.4H588.0V714.4H589.0V716.4H590.0V718.4H591.0V720.4H592.0V722.4H593.0V724.4H594.0V726.4H596.0V730.4H597.0V732.4H598.0V734.4H599.0V736.4H600.0V738.4H602.0V740.4H603.0V742.4H604.0V744.4H606.0V746.4H607.0V748.4H608.0V750.4H611.0V752.4H614.0V754.4H617.0V756.4H622.0V758.4H628.0V756.4H631.0V754.4H632.0V756.4H633.0V754.4H636.0V752.4H637.0V750.4H638.0V752.4H639.0V750.4H641.0V748.4H643.0V746.4H645.0V744.4H646.0V742.4H647.0V740.4H648.0V738.4H650.0V736.4H651.0V734.4H652.0V732.4H653.0V730.4H654.0V728.4H656.0V724.4H657.0V722.4H658.0V720.4H659.0V718.4H660.0V716.4H661.0V714.4H662.0V712.4H663.0V708.4H664.0V706.4H665.0V704.4H666.0V702.4H667.0V698.4H668.0V696.4H669.0V694.4H670.0V690.4H671.0V688.4H672.0V686.4H673.0V682.4H674.0V680.4H675.0V676.4H676.0V674.4H677.0V670.4H678.0V668.4H679.0V664.4H680.0V662.4H681.0V658.4H682.0V654.4H683.0V650.4H684.0V648.4H685.0V644.4H686.0V642.4H687.0V638.4H688.0V634.4H689.0V632.4H690.0V628.4H691.0V624.4H692.0V620.4H693.0V618.4H694.0V614.4H695.0V610.4H696.0V606.4H697.0V604.4H698.0V600.4H699.0V596.4H700.0V592.4H701.0V588.4H702.0V584.4H703.0V582.4H704.0V578.4H705.0V574.4H706.0V570.4H707.0V566.4H708.0V562.4H709.0V558.4H710.0V556.4H711.0V552.4H712.0V548.4H713.0V544.4H714.0V540.4H715.0V536.4H716.0V532.4H717.0V530.4H718.0V526.4H719.0V522.4H720.0V518.4H721.0V514.4H722.0V510.4H723.0V506.4H724.0V504.4H725.0V500.4H726.0V496.4H727.0V492.4H728.0V490.4H729.0V486.4H730.0V482.4H731.0V478.4H732.0V476.4H733.0V472.4H734.0V468.4H735.0V464.4H736.0V462.4H737.0V456.4H738.0V454.4H739.0V452.4H740.0V448.4H742.0V442.4H743.0V438.4H744.0V436.4H745.0V432.4H746.0V430.4H747.0V426.4H748.0V424.4H749.0V422.4H750.0V418.4H751.0V416.4H752.0V412.4H753.0V410.4H754.0V408.4H755.0V404.4H756.0V402.4H757.0V400.4H758.0V398.4H759.0V396.4H760.0V392.4H761.0V390.4H762.0V388.4H763.0V386.4H764.0V384.4H765.0V382.4H766.0V380.4H767.0V378.4H768.0V376.4H769.0V372.4H771.0V370.4H773.0V368.4H774.0V364.4H777.0V362.4H778.0V360.4H780.0V358.4H782.0V356.4H784.0V354.4H786.0V352.4H789.0V350.4H805.0V352.4H808.0V354.4H810.0V356.4H812.0V358.4H814.0V360.4H816.0V362.4H817.0V364.4H819.0V366.4H821.0V370.4H823.0V372.4H824.0V374.4H825.0V378.4H827.0V380.4H828.0V382.4H829.0V384.4H830.0V386.4H831.0V388.4H832.0V390.4H833.0V392.4H834.0V396.4H835.0V398.4H836.0V400.4H837.0V402.4H838.0V404.4H839.0V410.4H841.0V412.4H842.0V416.4H843.0V418.4H844.0V422.4H845.0V424.4H846.0V426.4H847.0V430.4H848.0V432.4H849.0V438.4H850.0V440.4H851.0V442.4H852.0V446.4H853.0V448.4H854.0V452.4H855.0V454.4H856.0V458.4H857.0V462.4H858.0V464.4H859.0V468.4H860.0V472.4H861.0V476.4H862.0V478.4H863.0V482.4H864.0V486.4H865.0V490.4H866.0V492.4H867.0V496.4H868.0V500.4H869.0V504.4H870.0V506.4H871.0V510.4H872.0V514.4H873.0V518.4H874.0V522.4H875.0V526.4H876.0V530.4H877.0V532.4H878.0V536.4H879.0V540.4H880.0V544.4H881.0V548.4H882.0V552.4H883.0V556.4H884.0V558.4H885.0V562.4H886.0V566.4H887.0V570.4H888.0V574.4H889.0V578.4H890.0V582.4H891.0V584.4H892.0V588.4H893.0V592.4H894.0V596.4H895.0V600.4H896.0V604.4H897.0V606.4H898.0V610.4H899.0V614.4H900.0V618.4H902.0V624.4H903.0V628.4H904.0V632.4H905.0V634.4H906.0V638.4H907.0V642.4H908.0V644.4H909.0V648.4H910.0V652.4H911.0V654.4H912.0V658.4H913.0V664.4H915.0V668.4H916.0V670.4H917.0V674.4H918.0V678.4H919.0V680.4H920.0V682.4H921.0V686.4H922.0V688.4H923.0V690.4H924.0V694.4H925.0V696.4H926.0V698.4H927.0V702.4H928.0V704.4H929.0V706.4H930.0V708.4H931.0V712.4H932.0V714.4H933.0V716.4H934.0V718.4H935.0V720.4H936.0V722.4H937.0V724.4H938.0V726.4H939.0V728.4H940.0V730.4H941.0V734.4H943.0V736.4H944.0V738.4H946.0V740.4H947.0V742.4H948.0V744.4H950.0V746.4H951.0V748.4H953.0V750.4H955.0V752.4H958.0V754.4H961.0V756.4H966.0V758.4H972.0V756.4H977.0V754.4H980.0V752.4H981.0V754.4H982.0V752.4H983.0V750.4H985.0V748.4H987.0V746.4H988.0V744.4H990.0V742.4H991.0V740.4H992.0V738.4H994.0V736.4H995.0V734.4H996.0V732.4H997.0V730.4H998.0V728.4H999.0V726.4H1000.0V724.4H1001.0V722.4H1002.0V720.4H1003.0V718.4H1004.0V716.4H1005.0V714.4H1006.0V712.4H1007.0V708.4H1008.0V706.4H1009.0V704.4H1010.0V702.4H1011.0V698.4H1012.0V696.4H1013.0V694.4H1014.0V690.4H1015.0V688.4H1016.0V686.4H1017.0V682.4H1018.0V680.4H1019.0V676.4H1020.0V674.4H1021.0V670.4H1022.0V668.4H1023.0V664.4H1024.0V662.4H1025.0V658.4H1026.0V654.4H1027.0V652.4H1028.0V648.4H1029.0V644.4H1030.0V642.4H1031.0V638.4H1032.0V634.4H1033.0V632.4H1034.0V628.4H1035.0V624.4H1036.0V620.4H1037.0V618.4H1038.0V616.4H1039.0V610.4H1040.0V606.4H1041.0V604.4H1042.0V600.4H1043.0V596.4H1044.0V592.4H1045.0V588.4H1046.0V584.4H1047.0V582.4H1048.0V578.4H1049.0V574.4H1050.0V570.4H1051.0V566.4H1052.0V562.4H1053.0V558.4H1054.0V556.4H1055.0V552.4H1056.0V548.4H1057.0V544.4H1058.0V540.4H1059.0V534.4H1060.0V532.4H1061.0V530.4H1062.0V526.4H1063.0V522.4H1064.0V518.4H1065.0V514.4H1066.0V510.4H1067.0V506.4H1068.0V504.4H1069.0V500.4H1070.0V496.4H1071.0V492.4H1073.0V486.4H1074.0V482.4H1075.0V478.4H1076.0V476.4H1077.0V472.4H1078.0V468.4H1079.0V462.4H1081.0V458.4H1082.0V454.4H1083.0V452.4H1084.0V448.4H1085.0V446.4H1086.0V442.4H1087.0V438.4H1088.0V436.4H1089.0V432.4H1090.0V430.4H1091.0V426.4H1092.0V424.4H1093.0V422.4H1094.0V418.4H1095.0V416.4H1096.0V412.4H1097.0V410.4H1098.0V408.4H1099.0V404.4H1100.0V402.4H1101.0V400.4H1102.0V398.4H1103.0V396.4H1104.0V392.4H1105.0V390.4H1106.0V388.4H1107.0V386.4H1108.0V384.4H1109.0V382.4H1110.0V380.4H1111.0V378.4H1113.0V374.4H1114.0V372.4H1115.0V370.4H1117.0V368.4H1118.0V366.4H1119.0V364.4H1121.0V362.4H1121" fill="none" stroke="#e440f6" stroke-width="1.1" stroke-linejoin="miter"/><rect x="102" y="346.6" width="13" height="3.4" fill="#e440f6"/><rect x="620" y="755.5" width="10" height="3" fill="#e440f6"/><rect x="964" y="755.5" width="10" height="3" fill="#e440f6"/></svg>
<div class="t" style="left:43.50px;top:125.50px;font-size:11px;line-height:15px;color:#c83edb;letter-spacing:0.829px;">200mV</div>
<div class="t" style="left:43.50px;top:205.80px;font-size:11px;line-height:15px;color:#c83edb;letter-spacing:0.829px;">160mV</div>
<div class="t" style="left:43.50px;top:286.10px;font-size:11px;line-height:15px;color:#c83edb;letter-spacing:0.829px;">120mV</div>
<div class="t" style="left:50.00px;top:366.40px;font-size:11px;line-height:15px;color:#c83edb;letter-spacing:0.941px;">80mV</div>
<div class="t" style="left:50.00px;top:446.70px;font-size:11px;line-height:15px;color:#c83edb;letter-spacing:0.941px;">40mV</div>
<div class="t" style="left:61.50px;top:527.00px;font-size:11px;line-height:15px;color:#c83edb;letter-spacing:0.476px;">0nV</div>
<div class="t" style="left:46.00px;top:607.30px;font-size:11px;line-height:15px;color:#c83edb;letter-spacing:0.820px;">-40mV</div>
<div class="t" style="left:46.00px;top:687.60px;font-size:11px;line-height:15px;color:#c83edb;letter-spacing:0.820px;">-80mV</div>
<div class="t" style="left:39.00px;top:767.90px;font-size:11px;line-height:15px;color:#c83edb;letter-spacing:0.830px;">-120mV</div>
<div class="t" style="left:39.00px;top:848.20px;font-size:11px;line-height:15px;color:#c83edb;letter-spacing:0.830px;">-160mV</div>
<div class="t" style="left:39.00px;top:928.50px;font-size:11px;line-height:15px;color:#c83edb;letter-spacing:0.830px;">-200mV</div>
<div class="t" style="left:1130.00px;top:125.50px;font-size:11px;line-height:15px;color:#ecc794;letter-spacing:0.022px;">2V</div>
<div class="t" style="left:1130.00px;top:205.80px;font-size:11px;line-height:15px;color:#ecc794;letter-spacing:0.593px;">1,6V</div>
<div class="t" style="left:1130.00px;top:286.10px;font-size:11px;line-height:15px;color:#ecc794;letter-spacing:0.593px;">1,2V</div>
<div class="t" style="left:1130.00px;top:366.40px;font-size:11px;line-height:15px;color:#ecc794;letter-spacing:0.929px;">800mV</div>
<div class="t" style="left:1130.00px;top:446.70px;font-size:11px;line-height:15px;color:#ecc794;letter-spacing:0.929px;">400mV</div>
<div class="t" style="left:1130.00px;top:527.00px;font-size:11px;line-height:15px;color:#ecc794;letter-spacing:0.476px;">0nV</div>
<div class="t" style="left:1130.00px;top:607.30px;font-size:11px;line-height:15px;color:#ecc794;letter-spacing:0.914px;">-400mV</div>
<div class="t" style="left:1130.00px;top:687.60px;font-size:11px;line-height:15px;color:#ecc794;letter-spacing:0.914px;">-800mV</div>
<div class="t" style="left:1130.00px;top:767.90px;font-size:11px;line-height:15px;color:#ecc794;letter-spacing:0.541px;">-1,2V</div>
<div class="t" style="left:1130.00px;top:848.20px;font-size:11px;line-height:15px;color:#ecc794;letter-spacing:0.541px;">-1,6V</div>
<div class="t" style="left:1130.00px;top:928.50px;font-size:11px;line-height:15px;color:#ecc794;transform:scaleX(0.9931);transform-origin:0 50%;">-2V</div>
<div class="t" style="left:70.65px;top:944.00px;font-size:11px;line-height:15px;color:#e4e4e4;transform:scaleX(0.9689);transform-origin:0 50%;">-25,0ms</div>
<div class="t" style="left:173.87px;top:944.00px;font-size:11px;line-height:15px;color:#e4e4e4;transform:scaleX(0.9689);transform-origin:0 50%;">-20,0ms</div>
<div class="t" style="left:277.09px;top:944.00px;font-size:11px;line-height:15px;color:#e4e4e4;transform:scaleX(0.9689);transform-origin:0 50%;">-15,0ms</div>
<div class="t" style="left:380.31px;top:944.00px;font-size:11px;line-height:15px;color:#e4e4e4;transform:scaleX(0.9689);transform-origin:0 50%;">-10,0ms</div>
<div class="t" style="left:486.53px;top:944.00px;font-size:11px;line-height:15px;color:#e4e4e4;transform:scaleX(0.9667);transform-origin:0 50%;">-5,0ms</div>
<div class="t" style="left:591.75px;top:944.00px;font-size:11px;line-height:15px;color:#e4e4e4;transform:scaleX(0.9514);transform-origin:0 50%;">0,0ms</div>
<div class="t" style="left:694.97px;top:944.00px;font-size:11px;line-height:15px;color:#e4e4e4;transform:scaleX(0.9514);transform-origin:0 50%;">5,0ms</div>
<div class="t" style="left:794.94px;top:944.00px;font-size:11px;line-height:15px;color:#e4e4e4;transform:scaleX(0.9702);transform-origin:0 50%;">10,0ms</div>
<div class="t" style="left:898.16px;top:944.00px;font-size:11px;line-height:15px;color:#e4e4e4;transform:scaleX(0.9702);transform-origin:0 50%;">15,0ms</div>
<div class="t" style="left:1001.38px;top:944.00px;font-size:11px;line-height:15px;color:#e4e4e4;transform:scaleX(0.9702);transform-origin:0 50%;">20,0ms</div>
<div class="t" style="left:1104.60px;top:944.00px;font-size:11px;line-height:15px;color:#e4e4e4;transform:scaleX(0.9702);transform-origin:0 50%;">25,0ms</div>
<div class="t" style="left:26px;top:533.5px;font-size:11px;line-height:14px;color:#c83edb;letter-spacing:0.693px;transform:translate(-50%,-50%) rotate(-90deg);">Channel A</div>
<div class="t" style="left:1181px;top:533px;font-size:11px;line-height:14px;color:#ecc794;letter-spacing:0.625px;transform:translate(-50%,-50%) rotate(90deg);">Channel B</div>
<div class="t" style="left:349.50px;top:122.00px;font-size:11px;line-height:15px;color:#f0f0f0;letter-spacing:-1.198px;transform:scaleX(0.9000);transform-origin:0 50%;">C1</div>
<div class="t" style="left:865.50px;top:122.00px;font-size:11px;line-height:15px;color:#f0f0f0;letter-spacing:-0.365px;transform:scaleX(0.9000);transform-origin:0 50%;">C2</div>
<div class="t" style="left:352.50px;top:146.00px;font-size:11px;line-height:15px;color:#c33ad6;transform:scaleX(0.9781);transform-origin:0 50%;">-42,4mV / -12,5ms</div>
<div class="t" style="left:352.50px;top:160.80px;font-size:11px;line-height:15px;color:#ecc794;transform:scaleX(0.9821);transform-origin:0 50%;">455,8µV / -12,5ms</div>
<div class="t" style="left:868.50px;top:146.00px;font-size:11px;line-height:15px;color:#c33ad6;transform:scaleX(0.9741);transform-origin:0 50%;">25,3mV / 12,5ms</div>
<div class="t" style="left:868.50px;top:160.80px;font-size:11px;line-height:15px;color:#ecc794;transform:scaleX(0.9832);transform-origin:0 50%;">455,8µV / 12,5ms</div>
<div style="position:absolute;left:1000px;top:911px;width:118px;height:25px;background:#000;"></div>
<div class="t" style="left:1007.00px;top:909.80px;font-size:11.5px;line-height:15px;color:#d63ae8;transform:scaleX(0.9678);transform-origin:0 50%;">f: 60,47Hz 40,0mV/div</div>
<div class="t" style="left:1001.50px;top:922.90px;font-size:11.5px;line-height:15px;color:#f0b878;transform:scaleX(0.9673);transform-origin:0 50%;">f: 6,01kHz 400,0mV/div</div>
<div class="t" style="left:140.00px;top:916.00px;font-size:11px;line-height:15px;color:#f2f2f2;transform:scaleX(0.9561);transform-origin:0 50%;">Tb = 5ms/div</div>
<svg width="1924" height="1041"><circle cx="102.6" cy="923.4" r="6.3" fill="none" stroke="#f4f4f4" stroke-width="1.9"/><path d="M107.5 928.3 L113.19999999999999 933.8" stroke="#f4f4f4" stroke-width="3" stroke-linecap="round"/><path d="M99.0 923.4 H106.19999999999999" stroke="#f4f4f4" stroke-width="1.9"/><path d="M102.6 919.8 V927" stroke="#f4f4f4" stroke-width="1.9"/><circle cx="122.8" cy="923.4" r="6.3" fill="none" stroke="#f4f4f4" stroke-width="1.9"/><path d="M127.7 928.3 L133.4 933.8" stroke="#f4f4f4" stroke-width="3" stroke-linecap="round"/><path d="M119.2 923.4 H126.39999999999999" stroke="#f4f4f4" stroke-width="1.9"/></svg>
<svg width="1924" height="1041" shape-rendering="crispEdges"><path d="M1297 131.5 H1835" stroke="#666666" stroke-width="1" stroke-dasharray="3 3"/><path d="M1297 210.5 H1835" stroke="#666666" stroke-width="1" stroke-dasharray="3 3"/><path d="M1297 289.5 H1835" stroke="#666666" stroke-width="1" stroke-dasharray="3 3"/><path d="M1297 368.5 H1835" stroke="#666666" stroke-width="1" stroke-dasharray="3 3"/><path d="M1297 447.5 H1835" stroke="#666666" stroke-width="1" stroke-dasharray="3 3"/><path d="M1297 526.5 H1835" stroke="#666666" stroke-width="1" stroke-dasharray="3 3"/><path d="M1297 605.5 H1835" stroke="#666666" stroke-width="1" stroke-dasharray="3 3"/><path d="M1297 684.5 H1835" stroke="#666666" stroke-width="1" stroke-dasharray="3 3"/><path d="M1297 763.5 H1835" stroke="#666666" stroke-width="1" stroke-dasharray="3 3"/><path d="M1297 842.5 H1835" stroke="#666666" stroke-width="1" stroke-dasharray="3 3"/><path d="M1349.5 131 V923" stroke="#666666" stroke-width="1" stroke-dasharray="3 3"/><path d="M1403.5 131 V923" stroke="#666666" stroke-width="1" stroke-dasharray="3 3"/><path d="M1457.5 131 V923" stroke="#666666" stroke-width="1" stroke-dasharray="3 3"/><path d="M1511.5 131 V923" stroke="#666666" stroke-width="1" stroke-dasharray="3 3"/><path d="M1565.5 131 V923" stroke="#666666" stroke-width="1" stroke-dasharray="3 3"/><path d="M1619.5 131 V923" stroke="#666666" stroke-width="1" stroke-dasharray="3 3"/><path d="M1673.5 131 V923" stroke="#666666" stroke-width="1" stroke-dasharray="3 3"/><path d="M1727.5 131 V923" stroke="#666666" stroke-width="1" stroke-dasharray="3 3"/><path d="M1781.5 131 V923" stroke="#666666" stroke-width="1" stroke-dasharray="3 3"/><path d="M1297 220.5 H1835" stroke="#e6dcc4" stroke-width="1" stroke-dasharray="3 3"/><rect x="1294" y="922" width="543" height="2" fill="#d8d8d8"/><rect x="1296" y="924" width="1" height="5" fill="#c8c8c8"/><rect x="1350" y="924" width="1" height="5" fill="#c8c8c8"/><rect x="1404" y="924" width="1" height="5" fill="#c8c8c8"/><rect x="1458" y="924" width="1" height="5" fill="#c8c8c8"/><rect x="1512" y="924" width="1" height="5" fill="#c8c8c8"/><rect x="1566" y="924" width="1" height="5" fill="#c8c8c8"/><rect x="1619" y="924" width="1" height="5" fill="#c8c8c8"/><rect x="1673" y="924" width="1" height="5" fill="#c8c8c8"/><rect x="1727" y="924" width="1" height="5" fill="#c8c8c8"/><rect x="1781" y="924" width="1" height="5" fill="#c8c8c8"/><rect x="1835" y="924" width="1" height="5" fill="#c8c8c8"/><rect x="1293" y="131" width="2" height="793" fill="#e61af5"/><path d="M1295.5 131 V923" stroke="#f2e6f2" stroke-width="1" stroke-dasharray="3 3"/><rect x="1289" y="141" width="4" height="1" fill="#e61af5"/><rect x="1291" y="161" width="2" height="1" fill="#8a1890"/><rect x="1291" y="181" width="2" height="1" fill="#8a1890"/><rect x="1291" y="200" width="2" height="1" fill="#8a1890"/><rect x="1289" y="220" width="4" height="1" fill="#e61af5"/><rect x="1291" y="240" width="2" height="1" fill="#8a1890"/><rect x="1291" y="260" width="2" height="1" fill="#8a1890"/><rect x="1291" y="279" width="2" height="1" fill="#8a1890"/><rect x="1289" y="299" width="4" height="1" fill="#e61af5"/><rect x="1291" y="319" width="2" height="1" fill="#8a1890"/><rect x="1291" y="339" width="2" height="1" fill="#8a1890"/><rect x="1291" y="358" width="2" height="1" fill="#8a1890"/><rect x="1289" y="378" width="4" height="1" fill="#e61af5"/><rect x="1291" y="398" width="2" height="1" fill="#8a1890"/><rect x="1291" y="417" width="2" height="1" fill="#8a1890"/><rect x="1291" y="437" width="2" height="1" fill="#8a1890"/><rect x="1289" y="457" width="4" height="1" fill="#e61af5"/><rect x="1291" y="477" width="2" height="1" fill="#8a1890"/><rect x="1291" y="496" width="2" height="1" fill="#8a1890"/><rect x="1291" y="516" width="2" height="1" fill="#8a1890"/><rect x="1289" y="536" width="4" height="1" fill="#e61af5"/><rect x="1291" y="556" width="2" height="1" fill="#8a1890"/><rect x="1291" y="575" width="2" height="1" fill="#8a1890"/><rect x="1291" y="595" width="2" height="1" fill="#8a1890"/><rect x="1289" y="615" width="4" height="1" fill="#e61af5"/><rect x="1291" y="634" width="2" height="1" fill="#8a1890"/><rect x="1291" y="654" width="2" height="1" fill="#8a1890"/><rect x="1291" y="674" width="2" height="1" fill="#8a1890"/><rect x="1289" y="694" width="4" height="1" fill="#e61af5"/><rect x="1291" y="713" width="2" height="1" fill="#8a1890"/><rect x="1291" y="733" width="2" height="1" fill="#8a1890"/><rect x="1291" y="753" width="2" height="1" fill="#8a1890"/><rect x="1289" y="772" width="4" height="1" fill="#e61af5"/><rect x="1291" y="792" width="2" height="1" fill="#8a1890"/><rect x="1291" y="812" width="2" height="1" fill="#8a1890"/><rect x="1291" y="832" width="2" height="1" fill="#8a1890"/><rect x="1289" y="851" width="4" height="1" fill="#e61af5"/><rect x="1291" y="871" width="2" height="1" fill="#8a1890"/><rect x="1291" y="891" width="2" height="1" fill="#8a1890"/><rect x="1291" y="911" width="2" height="1" fill="#8a1890"/><rect x="1835" y="131" width="2" height="793" fill="#f4a857"/><rect x="1837" y="141" width="4" height="1" fill="#f4a857"/><rect x="1837" y="161" width="2" height="1" fill="#8e6434"/><rect x="1837" y="181" width="2" height="1" fill="#8e6434"/><rect x="1837" y="200" width="2" height="1" fill="#8e6434"/><rect x="1837" y="220" width="4" height="1" fill="#f4a857"/><rect x="1837" y="240" width="2" height="1" fill="#8e6434"/><rect x="1837" y="260" width="2" height="1" fill="#8e6434"/><rect x="1837" y="279" width="2" height="1" fill="#8e6434"/><rect x="1837" y="299" width="4" height="1" fill="#f4a857"/><rect x="1837" y="319" width="2" height="1" fill="#8e6434"/><rect x="1837" y="339" width="2" height="1" fill="#8e6434"/><rect x="1837" y="358" width="2" height="1" fill="#8e6434"/><rect x="1837" y="378" width="4" height="1" fill="#f4a857"/><rect x="1837" y="398" width="2" height="1" fill="#8e6434"/><rect x="1837" y="417" width="2" height="1" fill="#8e6434"/><rect x="1837" y="437" width="2" height="1" fill="#8e6434"/><rect x="1837" y="457" width="4" height="1" fill="#f4a857"/><rect x="1837" y="477" width="2" height="1" fill="#8e6434"/><rect x="1837" y="496" width="2" height="1" fill="#8e6434"/><rect x="1837" y="516" width="2" height="1" fill="#8e6434"/><rect x="1837" y="536" width="4" height="1" fill="#f4a857"/><rect x="1837" y="556" width="2" height="1" fill="#8e6434"/><rect x="1837" y="575" width="2" height="1" fill="#8e6434"/><rect x="1837" y="595" width="2" height="1" fill="#8e6434"/><rect x="1837" y="615" width="4" height="1" fill="#f4a857"/><rect x="1837" y="634" width="2" height="1" fill="#8e6434"/><rect x="1837" y="654" width="2" height="1" fill="#8e6434"/><rect x="1837" y="674" width="2" height="1" fill="#8e6434"/><rect x="1837" y="694" width="4" height="1" fill="#f4a857"/><rect x="1837" y="713" width="2" height="1" fill="#8e6434"/><rect x="1837" y="733" width="2" height="1" fill="#8e6434"/><rect x="1837" y="753" width="2" height="1" fill="#8e6434"/><rect x="1837" y="772" width="4" height="1" fill="#f4a857"/><rect x="1837" y="792" width="2" height="1" fill="#8e6434"/><rect x="1837" y="812" width="2" height="1" fill="#8e6434"/><rect x="1837" y="832" width="2" height="1" fill="#8e6434"/><rect x="1837" y="851" width="4" height="1" fill="#f4a857"/><rect x="1837" y="871" width="2" height="1" fill="#8e6434"/><rect x="1837" y="891" width="2" height="1" fill="#8e6434"/><rect x="1837" y="911" width="2" height="1" fill="#8e6434"/></svg>
<svg width="1924" height="1041"><polyline points="1296.0 537.1 1297.1 557.9 1298.3 559.2 1299.7 578.3 1300.6 594.6 1302.0 534.5 1303.3 554.3 1304.1 555.0 1305.1 567.3 1306.5 604.0 1307.7 533.9 1308.7 553.1 1310.2 564.1 1311.2 535.9 1312.0 554.5 1313.1 540.1 1314.5 562.1 1315.6 553.2 1316.7 569.6 1317.7 579.2 1319.1 553.5 1320.0 590.4 1320.9 540.0 1322.3 548.1 1323.5 563.4 1324.5 562.3 1325.9 544.3 1326.9 578.8 1328.2 584.9 1329.2 576.4 1330.2 585.3 1331.2 558.2 1332.2 521.9 1333.4 562.9 1334.4 569.5 1335.3 535.0 1336.6 561.4 1338.1 550.2 1339.2 556.3 1340.1 555.6 1341.1 561.2 1342.0 598.0 1342.9 555.7 1344.1 569.9 1345.5 554.1 1346.7 575.7 1347.7 547.3 1349.1 550.5 1350.4 547.3 1351.2 593.4 1352.5 556.1 1353.7 552.9 1354.7 558.7 1356.0 553.5 1357.3 546.9 1358.4 531.5 1359.8 562.9 1361.2 543.8 1362.4 540.9 1363.3 565.2 1364.8 568.9 1366.1 539.3 1367.2 556.5 1368.0 549.0 1369.2 556.2 1370.4 573.7 1371.4 564.7 1372.3 554.5 1373.7 546.2 1374.8 541.9 1375.7 532.4 1377.1 563.7 1378.3 550.9 1379.7 560.2 1381.0 563.7 1382.1 550.6 1383.1 538.2 1384.1 563.2 1385.6 592.8 1386.4 555.3 1387.6 624.0 1388.7 591.8 1389.7 556.4 1390.8 557.0 1392.1 565.5 1393.0 523.2 1393.9 568.6 1394.9 554.9 1395.9 548.8 1397.2 539.0 1398.6 558.6 1399.9 550.9 1401.0 533.9 1402.2 533.7 1403.6 567.6 1404.5 549.0 1405.9 541.0 1407.3 538.0 1408.8 531.7 1410.2 548.8 1411.3 566.2 1412.6 561.0 1413.4 555.8 1414.4 549.7 1415.7 558.8 1417.0 559.8 1418.3 568.4 1419.2 549.1 1420.3 548.9 1421.5 574.5 1422.7 549.4 1424.1 566.0 1425.5 569.7 1426.5 551.1 1427.6 551.8 1428.8 552.3 1430.1 540.3 1431.0 548.4 1432.1 582.7 1433.2 546.4 1434.3 565.5 1435.3 528.7 1436.6 560.4 1437.4 551.2 1438.3 549.9 1439.6 589.9 1440.5 544.5 1441.6 553.7 1442.7 540.7 1443.6 562.6 1444.9 529.4 1446.3 549.7 1447.6 564.8 1448.6 528.4 1449.6 581.6 1450.5 554.1 1451.5 574.6 1452.9 568.5 1454.0 553.5 1455.2 552.2 1456.7 566.0 1457.9 564.7 1458.8 585.7 1460.0 557.2 1460.9 558.0 1462.3 562.6 1463.2 584.1 1464.5 566.7 1465.7 532.0 1466.5 532.0 1467.9 560.6 1469.0 567.6 1469.9 552.3 1471.2 554.4 1472.6 545.5 1473.8 545.0 1475.2 553.2 1476.5 583.2 1477.6 576.0 1478.9 538.5 1480.0 553.9 1481.1 581.2 1482.4 548.0 1483.6 548.1 1484.9 540.2 1486.4 548.0 1487.7 587.5 1489.0 518.5 1490.1 562.9 1491.0 557.5 1492.4 616.0 1493.6 550.0 1494.8 556.7 1496.2 595.2 1497.1 547.1 1498.3 595.6 1499.4 537.6 1500.4 552.0 1501.6 550.6 1502.4 575.1 1503.2 567.0 1504.7 573.1 1505.5 594.7 1506.6 552.7 1508.1 555.6 1509.4 570.8 1510.9 588.0 1512.0 538.8 1512.8 548.4 1514.1 553.8 1515.1 543.2 1516.3 548.3 1517.7 594.5 1519.1 545.5 1520.1 552.4 1521.3 574.7 1522.7 558.7 1524.1 530.0 1524.9 564.7 1526.2 586.1 1527.0 571.9 1528.3 565.2 1529.4 558.1 1530.8 576.0 1532.2 539.3 1533.2 539.6 1534.6 542.3 1535.6 569.1 1537.0 567.3 1537.8 548.7 1538.7 569.8 1540.0 563.6 1541.3 563.3 1542.2 559.4 1543.5 551.6 1544.5 545.3 1545.6 570.4 1547.0 569.1 1548.5 533.7 1549.5 564.2 1550.9 563.1 1552.0 616.0 1553.1 548.9 1554.4 560.9 1555.8 547.9 1557.2 552.3 1558.1 539.2 1559.5 553.8 1560.9 570.5 1561.7 591.2 1563.2 571.4 1564.5 564.8 1565.5 559.6 1566.8 577.3 1567.8 574.6 1569.0 551.7 1570.3 567.0 1571.6 548.7 1572.9 569.3 1574.2 532.0 1575.5 560.0 1576.4 542.7 1577.9 550.0 1579.0 561.2 1580.5 589.2 1581.8 559.7 1582.7 539.0 1583.5 578.1 1584.4 557.6 1585.4 576.3 1586.4 565.9 1587.6 575.0 1588.7 553.9 1589.7 582.8 1591.2 596.5 1592.6 556.7 1593.7 545.4 1595.0 554.7 1595.8 543.4 1597.1 557.9 1598.0 562.1 1599.4 565.4 1600.7 566.0 1601.6 555.4 1602.4 566.7 1603.2 533.2 1604.5 568.0 1606.0 564.4 1607.4 526.0 1608.8 593.7 1609.8 540.6 1611.2 551.6 1612.2 565.8 1613.5 561.0 1614.8 566.2 1616.3 564.0 1617.5 628.0 1618.5 628.0 1619.6 596.1 1620.5 558.6 1621.5 544.5 1622.6 567.4 1623.8 555.7 1624.9 564.7 1626.1 554.1 1626.9 544.6 1627.8 547.1 1628.9 537.7 1630.1 564.0 1631.0 561.1 1631.8 568.2 1633.1 549.6 1634.5 547.3 1635.3 563.8 1636.6 579.0 1637.8 582.1 1638.8 552.6 1640.0 551.2 1641.4 550.4 1642.8 551.3 1643.8 549.0 1645.3 556.2 1646.6 560.7 1647.9 548.9 1648.7 556.8 1649.8 573.3 1650.8 549.8 1651.7 557.8 1652.9 540.8 1654.3 550.1 1655.7 551.0 1656.7 552.4 1657.7 534.4 1658.9 575.1 1659.8 587.1 1660.8 553.9 1662.1 543.6 1662.9 568.2 1664.1 564.4 1665.0 566.5 1666.0 545.8 1666.8 551.6 1667.7 573.5 1668.8 525.0 1670.1 626.0 1671.6 534.8 1673.0 544.8 1674.4 564.0 1675.6 530.9 1676.4 568.2 1677.8 554.6 1678.8 539.1 1679.7 566.6 1680.8 591.2 1681.9 557.3 1682.9 596.5 1684.4 543.4 1685.7 534.1 1687.1 593.6 1687.9 545.2 1689.4 566.4 1690.4 620.0 1691.8 546.9 1692.6 596.2 1693.7 526.4 1694.8 557.0 1695.8 581.2 1697.2 543.8 1698.3 569.3 1699.3 580.3 1700.2 592.2 1701.2 553.9 1702.6 555.2 1704.1 550.0 1704.9 558.7 1705.9 567.8 1706.8 545.1 1708.1 537.1 1709.3 558.3 1710.6 567.7 1711.8 588.2 1713.0 576.7 1713.8 548.3 1715.2 581.7 1716.5 557.2 1717.4 567.4 1718.9 571.1 1720.0 560.0 1721.2 522.0 1722.2 571.9 1723.6 541.6 1724.8 555.4 1726.3 567.4 1727.5 577.1 1728.6 560.3 1729.6 534.4 1730.6 589.3 1731.9 549.7 1733.3 587.0 1734.4 563.8 1735.4 558.6 1736.5 623.0 1737.9 557.6 1738.7 564.4 1740.0 547.0 1740.8 555.5 1741.8 556.9 1743.1 564.8 1744.0 546.7 1745.5 586.9 1746.8 564.4 1748.1 581.0 1749.5 565.4 1750.6 576.0 1752.1 623.0 1753.1 536.1 1754.1 527.9 1755.1 564.5 1756.3 570.1 1757.2 560.5 1758.5 568.7 1759.6 544.2 1761.0 540.7 1762.0 572.7 1763.2 561.8 1764.3 564.9 1765.4 533.0 1766.4 556.5 1767.2 552.9 1768.1 545.9 1769.0 534.3 1770.0 575.8 1770.9 568.7 1772.2 552.6 1773.1 596.6 1774.1 568.9 1775.2 569.7 1776.1 561.8 1777.3 568.5 1778.5 559.7 1779.8 556.1 1780.7 661.0 1781.7 554.4 1783.1 544.6 1784.1 576.1 1785.3 565.0 1786.7 568.4 1788.1 555.9 1789.4 541.4 1790.4 529.5 1791.2 584.8 1792.3 563.3 1793.3 564.8 1794.2 568.7 1795.1 567.5 1796.1 564.2 1797.3 585.0 1798.4 585.4 1799.2 540.4 1800.3 530.0 1801.1 542.0 1802.1 580.2 1803.0 540.1 1804.0 561.2 1805.5 560.2 1806.6 539.6 1807.6 570.6 1809.0 579.0 1810.2 553.3 1811.1 569.2 1812.0 588.8 1813.1 549.2 1814.3 548.2 1815.5 606.0 1816.9 551.8 1818.0 568.2 1819.2 544.8 1820.2 527.0 1821.3 546.4 1822.6 553.0 1823.6 557.9 1824.7 569.4 1825.6 563.4 1826.5 560.4 1827.8 550.2 1829.2 582.0 1830.4 561.7 1831.4 545.5 1832.4 546.9 1833.8 576.9" fill="none" stroke="#f3b56c" stroke-width="1" stroke-linejoin="bevel"/><polyline points="1295.8 394.0 1296.3 404.8 1296.8 415.7 1297.3 423.8 1297.8 430.2 1298.3 436.7 1298.8 442.1 1299.3 446.2 1299.8 450.2 1300.3 454.3 1300.8 458.4 1301.3 461.3 1301.8 463.4 1302.3 465.6 1302.8 467.7 1303.3 469.9 1303.8 472.0 1304.3 474.1 1304.8 476.3 1305.3 478.4 1305.8 480.6 1306.3 481.8 1306.8 482.8 1307.3 483.8 1307.8 484.7 1308.3 485.7 1308.8 486.7 1309.3 487.7 1309.8 488.7 1310.3 489.7 1310.8 490.7 1311.3 491.6 1311.8 492.6 1312.3 493.6 1312.8 494.6 1313.3 495.3 1313.8 495.9 1314.3 496.4 1314.8 497.0 1315.3 497.6 1315.8 498.1 1316.3 498.7 1316.8 499.2 1317.3 499.8 1317.8 500.3 1318.3 500.9 1318.8 501.4 1319.3 502.0 1319.8 502.6 1320.3 503.1 1320.8 503.7 1321.3 504.2 1321.8 504.8 1322.3 505.2 1322.8 505.6 1323.3 506.0 1323.8 506.4 1324.3 506.8 1324.8 507.2 1325.3 507.6 1325.8 508.0 1326.3 508.4 1326.8 508.8 1327.3 509.2 1327.8 509.6 1328.3 510.0 1328.8 510.4 1329.3 510.8 1329.8 511.2 1330.3 511.5 1331.3 511.9 1332.3 513.6 1333.3 513.3 1334.3 515.2 1335.3 516.0 1336.3 516.3 1337.3 516.9 1338.3 518.1 1339.3 518.9 1340.3 518.5 1341.3 519.8 1342.3 521.5 1343.3 521.7 1344.3 522.1 1345.3 522.3 1346.3 523.1 1347.3 523.6 1348.3 526.4 1349.3 524.5 1350.3 526.8 1351.3 526.7 1352.3 527.2 1353.3 527.7 1354.3 527.9 1355.3 529.9 1356.3 529.7 1357.3 529.9 1358.3 530.4 1359.3 531.3 1360.3 530.8 1361.3 532.0 1362.3 532.3 1363.3 533.9 1364.3 534.5 1365.3 533.0 1366.3 534.9 1367.3 536.3 1368.3 534.7 1369.3 535.2 1370.3 537.5 1371.3 536.8 1372.3 536.9 1373.3 536.5 1374.3 538.2 1375.3 537.9 1376.3 539.0 1377.3 539.6 1378.3 540.2 1379.3 539.5 1380.3 539.7 1381.3 540.6 1382.3 540.9 1383.3 541.5 1384.3 541.1 1385.3 541.8 1386.3 541.8 1387.3 542.1 1388.3 543.3 1389.3 544.9 1390.3 543.3 1391.3 544.9 1392.3 545.0 1393.3 545.1 1394.3 546.2 1395.3 545.0 1396.3 546.6 1397.3 546.5 1398.3 541.9 1399.3 547.0 1400.3 547.5 1401.3 549.5 1402.3 545.8 1403.3 547.5 1404.3 548.1 1405.3 546.5 1406.3 549.7 1407.3 548.9 1408.3 547.4 1409.3 547.1 1410.3 548.4 1411.3 552.6 1412.3 552.5 1413.3 546.0 1414.3 547.2 1415.3 551.0 1416.3 550.1 1417.3 549.5 1418.3 551.6 1419.3 551.1 1420.3 551.6 1421.3 551.8 1422.3 549.9 1423.3 553.9 1424.3 551.3 1425.3 554.1 1426.3 553.6 1427.3 552.8 1428.3 553.1 1429.3 553.1 1430.3 550.3 1431.3 553.0 1432.3 554.5 1433.3 551.2 1434.3 551.5 1435.3 556.2 1436.3 555.9 1437.3 551.9 1438.3 555.6 1439.3 554.9 1440.3 556.9 1441.3 554.8 1442.3 555.1 1443.3 554.3 1444.3 556.2 1445.3 555.8 1446.3 555.0 1447.3 555.8 1448.3 555.2 1449.3 558.0 1450.3 555.0 1451.3 554.1 1452.3 555.4 1453.3 559.6 1454.3 556.7 1455.3 559.1 1456.3 559.5 1457.3 557.2 1458.3 559.9 1459.3 559.6 1460.3 558.7 1461.3 557.5 1462.3 559.0 1463.3 556.6 1464.3 558.9 1465.3 558.4 1466.3 560.8 1467.3 560.7 1468.3 558.8 1469.3 562.2 1470.3 563.1 1471.3 560.9 1472.3 559.3 1473.3 562.2 1474.3 555.8 1475.3 560.1 1476.3 562.9 1477.3 566.4 1478.3 560.3 1479.3 565.7 1480.3 567.7 1481.3 566.9 1482.3 557.1 1483.3 565.5 1484.3 563.5 1485.3 565.6 1486.3 563.0 1487.3 562.1 1488.3 563.1 1489.3 567.4 1490.3 565.9 1491.3 563.3 1492.3 565.0 1493.3 566.3 1494.3 565.7 1495.3 564.3 1496.3 562.8 1497.3 562.7 1498.3 563.5 1499.3 563.3 1500.3 560.8 1501.3 561.3 1502.3 567.3 1503.3 562.2 1504.3 561.8 1505.3 565.2 1506.3 569.3 1507.3 568.9 1508.3 564.5 1509.3 562.9 1510.3 564.4 1511.3 563.4 1512.3 564.5 1513.3 567.4 1514.3 563.3 1515.3 564.1 1516.3 565.7 1517.3 566.4 1518.3 564.4 1519.3 564.4 1520.3 563.6 1521.3 564.7 1522.3 568.5 1523.3 566.4 1524.3 558.1 1525.3 569.1 1526.3 567.2 1527.3 564.9 1528.3 566.8 1529.3 558.7 1530.3 562.8 1531.3 571.3 1532.3 574.3 1533.3 574.5 1534.3 565.9 1535.3 568.3 1536.3 570.7 1537.3 564.8 1538.3 573.7 1539.3 566.5 1540.3 569.8 1541.3 565.4 1542.3 570.0 1543.3 569.0 1544.3 572.3 1545.3 565.7 1546.3 569.3 1547.3 574.8 1548.3 565.9 1549.3 570.6 1550.3 571.0 1551.3 568.3 1552.3 569.1 1553.3 574.2 1554.3 573.5 1555.3 571.9 1556.3 571.1 1557.3 567.0 1558.3 570.7 1559.3 575.9 1560.3 573.8 1561.3 566.7 1562.3 564.6 1563.3 568.9 1564.3 571.5 1565.3 569.4 1566.3 570.2 1567.3 572.2 1568.3 573.9 1569.3 571.8 1570.3 575.0 1571.3 567.0 1572.3 572.7 1573.3 572.7 1574.3 567.0 1575.3 575.2 1576.3 566.7 1577.3 567.2 1578.3 579.6 1579.3 575.5 1580.3 572.8 1581.3 575.8 1582.3 575.2 1583.3 568.4 1584.3 573.3 1585.3 576.1 1586.3 571.4 1587.3 572.2 1588.3 570.6 1589.3 574.2 1590.3 570.4 1591.3 570.3 1592.3 568.5 1593.3 569.4 1594.3 572.9 1595.3 573.7 1596.3 571.2 1597.3 569.2 1598.3 573.4 1599.3 573.5 1600.3 576.3 1601.3 571.0 1602.3 571.3 1603.3 574.1 1604.3 577.2 1605.3 572.5 1606.3 572.5 1607.3 569.9 1608.3 571.7 1609.3 575.7 1610.3 575.5 1611.3 576.3 1612.3 568.0 1613.3 575.5 1614.3 570.3 1615.3 574.9 1616.3 566.0 1617.3 572.9 1618.3 570.5 1619.3 577.1 1620.3 573.7 1621.3 577.3 1622.3 572.0 1623.3 579.4 1624.3 572.1 1625.3 579.2 1626.3 572.1 1627.3 570.6 1628.3 576.3 1629.3 572.5 1630.3 573.5 1631.3 569.7 1632.3 572.7 1633.3 574.2 1634.3 571.7 1635.3 575.1 1636.3 567.0 1637.3 576.7 1638.3 572.8 1639.3 578.5 1640.3 573.0 1641.3 572.2 1642.3 572.8 1643.3 575.1 1644.3 576.1 1645.3 572.9 1646.3 571.9 1647.3 575.7 1648.3 576.9 1649.3 569.2 1650.3 571.3 1651.3 572.5 1652.3 579.7 1653.3 578.3 1654.3 577.0 1655.3 576.2 1656.3 571.3 1657.3 578.1 1658.3 573.4 1659.3 572.4 1660.3 580.7 1661.3 570.4 1662.3 579.0 1663.3 575.5 1664.3 572.1 1665.3 575.5 1666.3 572.4 1667.3 575.6 1668.3 573.1 1669.3 571.4 1670.3 583.1 1671.3 573.6 1672.3 578.1 1673.3 575.0 1674.3 577.2 1675.3 571.4 1676.3 572.1 1677.3 565.3 1678.3 578.3 1679.3 576.7 1680.3 571.8 1681.3 577.9 1682.3 577.2 1683.3 584.3 1684.3 576.2 1685.3 578.3 1686.3 577.4 1687.3 577.9 1688.3 575.5 1689.3 574.3 1690.3 577.8 1691.3 579.4 1692.3 572.1 1693.3 572.3 1694.3 575.6 1695.3 581.2 1696.3 575.2 1697.3 570.7 1698.3 578.3 1699.3 578.2 1700.3 581.8 1701.3 576.5 1702.3 581.9 1703.3 573.8 1704.3 578.8 1705.3 576.5 1706.3 572.5 1707.3 575.3 1708.3 580.2 1709.3 579.6 1710.3 575.0 1711.3 579.6 1712.3 579.0 1713.3 579.0 1714.3 577.2 1715.3 577.3 1716.3 573.8 1717.3 576.2 1718.3 576.8 1719.3 574.2 1720.3 575.6 1721.3 577.0 1722.3 577.2 1723.3 579.8 1724.3 573.5 1725.3 575.4 1726.3 577.5 1727.3 575.5 1728.3 577.7 1729.3 575.3 1730.3 580.3 1731.3 576.1 1732.3 573.3 1733.3 579.1 1734.3 581.9 1735.3 571.0 1736.3 576.5 1737.3 577.2 1738.3 580.1 1739.3 581.5 1740.3 576.5 1741.3 572.3 1742.3 579.1 1743.3 580.1 1744.3 578.5 1745.3 577.3 1746.3 574.7 1747.3 584.5 1748.3 573.5 1749.3 572.6 1750.3 580.1 1751.3 578.1 1752.3 579.3 1753.3 578.3 1754.3 582.4 1755.3 581.6 1756.3 575.6 1757.3 580.3 1758.3 573.7 1759.3 572.2 1760.3 581.0 1761.3 576.1 1762.3 570.9 1763.3 577.3 1764.3 575.4 1765.3 579.0 1766.3 577.3 1767.3 575.1 1768.3 575.3 1769.3 579.8 1770.3 574.7 1771.3 577.9 1772.3 574.5 1773.3 578.9 1774.3 583.0 1775.3 579.3 1776.3 581.0 1777.3 579.0 1778.3 574.7 1779.3 576.7 1780.3 577.9 1781.3 579.0 1782.3 575.9 1783.3 579.6 1784.3 575.5 1785.3 577.9 1786.3 577.7 1787.3 574.3 1788.3 580.8 1789.3 578.0 1790.3 578.2 1791.3 577.7 1792.3 571.5 1793.3 573.6 1794.3 575.2 1795.3 580.9 1796.3 576.2 1797.3 579.8 1798.3 574.8 1799.3 575.4 1800.3 576.6 1801.3 581.2 1802.3 573.0 1803.3 577.5 1804.3 579.3 1805.3 578.5 1806.3 578.0 1807.3 580.5 1808.3 579.0 1809.3 575.1 1810.3 580.1 1811.3 575.8 1812.3 577.1 1813.3 582.6 1814.3 585.6 1815.3 582.6 1816.3 579.5 1817.3 575.9 1818.3 576.0 1819.3 583.3 1820.3 579.3 1821.3 574.1 1822.3 583.1 1823.3 580.1 1824.3 582.4 1825.3 579.6 1826.3 571.9 1827.3 576.2 1828.3 578.0 1829.3 577.9 1830.3 583.0 1831.3 576.4 1832.3 578.2 1833.3 578.3" fill="none" stroke="#e440f6" stroke-width="1" stroke-linejoin="bevel"/></svg>
<div class="t" style="left:1248.00px;top:134.60px;font-size:11px;line-height:15px;color:#c83edb;letter-spacing:0.689px;">22,5dB</div>
<div class="t" style="left:1841.00px;top:134.60px;font-size:11px;line-height:15px;color:#ecc794;letter-spacing:0.689px;">22,5dB</div>
<div class="t" style="left:1258.00px;top:213.50px;font-size:11px;line-height:15px;color:#c83edb;letter-spacing:0.827px;">0ndB</div>
<div class="t" style="left:1841.00px;top:213.50px;font-size:11px;line-height:15px;color:#ecc794;letter-spacing:0.827px;">0ndB</div>
<div class="t" style="left:1242.50px;top:292.40px;font-size:11px;line-height:15px;color:#c83edb;letter-spacing:0.853px;">-22,5dB</div>
<div class="t" style="left:1841.00px;top:292.40px;font-size:11px;line-height:15px;color:#ecc794;letter-spacing:0.853px;">-22,5dB</div>
<div class="t" style="left:1242.50px;top:371.30px;font-size:11px;line-height:15px;color:#c83edb;letter-spacing:0.853px;">-45,0dB</div>
<div class="t" style="left:1841.00px;top:371.30px;font-size:11px;line-height:15px;color:#ecc794;letter-spacing:0.853px;">-45,0dB</div>
<div class="t" style="left:1242.50px;top:450.20px;font-size:11px;line-height:15px;color:#c83edb;letter-spacing:0.853px;">-67,5dB</div>
<div class="t" style="left:1841.00px;top:450.20px;font-size:11px;line-height:15px;color:#ecc794;letter-spacing:0.853px;">-67,5dB</div>
<div class="t" style="left:1242.50px;top:529.10px;font-size:11px;line-height:15px;color:#c83edb;letter-spacing:0.853px;">-90,0dB</div>
<div class="t" style="left:1841.00px;top:529.10px;font-size:11px;line-height:15px;color:#ecc794;letter-spacing:0.853px;">-90,0dB</div>
<div class="t" style="left:1236.00px;top:608.00px;font-size:11px;line-height:15px;color:#c83edb;letter-spacing:0.896px;">-112,6dB</div>
<div class="t" style="left:1841.00px;top:608.00px;font-size:11px;line-height:15px;color:#ecc794;letter-spacing:0.896px;">-112,6dB</div>
<div class="t" style="left:1236.00px;top:686.90px;font-size:11px;line-height:15px;color:#c83edb;letter-spacing:0.794px;">-135,1dB</div>
<div class="t" style="left:1841.00px;top:686.90px;font-size:11px;line-height:15px;color:#ecc794;letter-spacing:0.794px;">-135,1dB</div>
<div class="t" style="left:1236.00px;top:765.80px;font-size:11px;line-height:15px;color:#c83edb;letter-spacing:0.794px;">-157,6dB</div>
<div class="t" style="left:1841.00px;top:765.80px;font-size:11px;line-height:15px;color:#ecc794;letter-spacing:0.794px;">-157,6dB</div>
<div class="t" style="left:1236.00px;top:844.70px;font-size:11px;line-height:15px;color:#c83edb;letter-spacing:0.794px;">-180,1dB</div>
<div class="t" style="left:1841.00px;top:844.70px;font-size:11px;line-height:15px;color:#ecc794;letter-spacing:0.794px;">-180,1dB</div>
<div class="t" style="left:1813.50px;top:930.00px;font-size:11px;line-height:15px;color:#e4e4e4;transform:scaleX(0.9788);transform-origin:0 50%;">10,0kHz</div>
<div class="t" style="left:1225px;top:526.5px;font-size:11px;line-height:14px;color:#c83edb;letter-spacing:0.964px;transform:translate(-50%,-50%) rotate(-90deg);">Channel A (dB)</div>
<div class="t" style="left:1901px;top:526.5px;font-size:11px;line-height:14px;color:#ecc794;letter-spacing:0.878px;transform:translate(-50%,-50%) rotate(90deg);">Channel B (dB)</div><div class="sbtn" style="left:12px;top:965px;width:183px;height:23px;"></div>
<div class="t" style="left:26.50px;top:968.30px;font-size:12px;line-height:16px;color:#444;letter-spacing:-0.159px;transform:scaleX(0.9000);transform-origin:0 50%;">JoyScope Mx50 (Ser. no: 30316)</div>
<div class="sbtn" style="left:204px;top:965px;width:28px;height:23px;"></div>
<div class="sbtn" style="left:242px;top:965px;width:28px;height:23px;"></div>
<div class="sbtn" style="left:279px;top:965px;width:29px;height:23px;background:linear-gradient(#cfcfcf,#c6c6c6);border-color:#ababab;box-shadow:inset 0 1px 2px rgba(0,0,0,.15);"></div>
<div class="sbtn" style="left:318px;top:965px;width:28px;height:23px;"></div>
<div class="sbtn" style="left:356px;top:965px;width:28px;height:23px;"></div>
<svg width="1924" height="1041"><rect x="210.3" y="970.3" width="15" height="11.5" fill="#e8eefa" stroke="#6a80b4" stroke-width="1"/><rect x="210.3" y="970.3" width="15" height="2" fill="#a9c1ea"/><path d="M223.8 968.8 L214.3 980.0" stroke="#2c4c8e" stroke-width="2"/><path d="M249 975 L253 970 L257 976 L260 983 L263 971" stroke="#7c7fa0" stroke-width="1.1" fill="none"/><path d="M249 982 H253 C256 982,256 969,259 969 H263" stroke="#a7a9bd" stroke-width="1" fill="none"/><circle cx="294.3" cy="975.6" r="7.5" fill="#4a70b2"/><circle cx="294.3" cy="975.6" r="3.6" fill="#5c84cf"/><g stroke="#cbcbcb" stroke-width="1.25" stroke-linecap="butt"><path d="M297.44 976.90 L299.75 977.86"/><path d="M295.60 978.74 L296.56 981.05"/><path d="M293.00 978.74 L292.04 981.05"/><path d="M291.16 976.90 L288.85 977.86"/><path d="M291.16 974.30 L288.85 973.34"/><path d="M293.00 972.46 L292.04 970.15"/><path d="M295.60 972.46 L296.56 970.15"/><path d="M297.44 974.30 L299.75 973.34"/></g><g fill="#cbcbcb"><circle cx="301.78" cy="978.70" r="1.25"/><circle cx="297.40" cy="983.08" r="1.25"/><circle cx="291.20" cy="983.08" r="1.25"/><circle cx="286.82" cy="978.70" r="1.25"/><circle cx="286.82" cy="972.50" r="1.25"/><circle cx="291.20" cy="968.12" r="1.25"/><circle cx="297.40" cy="968.12" r="1.25"/><circle cx="301.78" cy="972.50" r="1.25"/></g><path d="M326.5 983.5 V969.5" stroke="#7a3052" stroke-width="1.1"/><path d="M324.2 971.3 L326.5 967.5 L328.8 971.3 Z" fill="#7a3052"/><path d="M323.5 981.3 H337.5" stroke="#b4dc9c" stroke-width="1.1"/><path d="M336.5 978.9 L340.5 981.3 L336.5 983.7 Z" fill="#b4dc9c" fill-opacity="0.35" stroke="#b4dc9c" stroke-width=".8"/><path d="M362 971.5 H366 L367.5 969.0 H372.5 L374 971.5 H378 V982.0 H362 Z" fill="#1f3f7c"/><rect x="363.5" y="969.9" width="2.4" height="1.6" fill="#1f3f7c"/><circle cx="371.6" cy="977.5" r="3.3" fill="#1f3f7c" stroke="#f2f4fa" stroke-width="1.5"/><circle cx="375.6" cy="973.5" r=".8" fill="#e8ecf6"/></svg>
<div class="sbtn" style="left:1221px;top:965px;width:183px;height:23px;"></div>
<div class="t" style="left:1235.50px;top:968.30px;font-size:12px;line-height:16px;color:#444;letter-spacing:-0.159px;transform:scaleX(0.9000);transform-origin:0 50%;">JoyScope Mx50 (Ser. no: 30316)</div>
<div class="sbtn" style="left:1413px;top:965px;width:28px;height:23px;"></div>
<div class="sbtn" style="left:1451px;top:965px;width:28px;height:23px;"></div>
<div class="sbtn" style="left:1489px;top:965px;width:28px;height:23px;"></div>
<div class="sbtn" style="left:1527px;top:965px;width:28px;height:23px;"></div>
<div class="sbtn" style="left:1565px;top:965px;width:28px;height:23px;"></div>
<svg width="1924" height="1041"><g fill="#2e2e2e"><rect x="1424.8" y="967.7" width="3.4" height="4" transform="rotate(0 1426.5 976)"/><rect x="1424.8" y="967.7" width="3.4" height="4" transform="rotate(45 1426.5 976)"/><rect x="1424.8" y="967.7" width="3.4" height="4" transform="rotate(90 1426.5 976)"/><rect x="1424.8" y="967.7" width="3.4" height="4" transform="rotate(135 1426.5 976)"/><rect x="1424.8" y="967.7" width="3.4" height="4" transform="rotate(180 1426.5 976)"/><rect x="1424.8" y="967.7" width="3.4" height="4" transform="rotate(225 1426.5 976)"/><rect x="1424.8" y="967.7" width="3.4" height="4" transform="rotate(270 1426.5 976)"/><rect x="1424.8" y="967.7" width="3.4" height="4" transform="rotate(315 1426.5 976)"/></g><circle cx="1426.5" cy="976" r="5.4" fill="none" stroke="#2e2e2e" stroke-width="2.6"/><circle cx="1426.2" cy="975.4" r="2.6" fill="#f0f0f0" stroke="#2e2e2e" stroke-width="1.6"/><path d="M1428.1 977.4 L1433.5 982.6" stroke="#f0f0f0" stroke-width="4"/><path d="M1428.1 977.4 L1433.1 982.2" stroke="#2e2e2e" stroke-width="2.2" stroke-linecap="round"/><rect x="1457.5" y="970.3" width="15" height="11.5" fill="#e8eefa" stroke="#6a80b4" stroke-width="1"/><rect x="1457.5" y="970.3" width="15" height="2" fill="#a9c1ea"/><path d="M1471 968.8 L1461.5 980.0" stroke="#2c4c8e" stroke-width="2"/><circle cx="1503" cy="975.8" r="7.5" fill="#4a70b2"/><circle cx="1503" cy="975.8" r="3.6" fill="#5c84cf"/><g stroke="#ececec" stroke-width="1.25" stroke-linecap="butt"><path d="M1506.14 977.10 L1508.45 978.06"/><path d="M1504.30 978.94 L1505.26 981.25"/><path d="M1501.70 978.94 L1500.74 981.25"/><path d="M1499.86 977.10 L1497.55 978.06"/><path d="M1499.86 974.50 L1497.55 973.54"/><path d="M1501.70 972.66 L1500.74 970.35"/><path d="M1504.30 972.66 L1505.26 970.35"/><path d="M1506.14 974.50 L1508.45 973.54"/></g><g fill="#ececec"><circle cx="1510.48" cy="978.90" r="1.25"/><circle cx="1506.10" cy="983.28" r="1.25"/><circle cx="1499.90" cy="983.28" r="1.25"/><circle cx="1495.52" cy="978.90" r="1.25"/><circle cx="1495.52" cy="972.70" r="1.25"/><circle cx="1499.90" cy="968.32" r="1.25"/><circle cx="1506.10" cy="968.32" r="1.25"/><circle cx="1510.48" cy="972.70" r="1.25"/></g><path d="M1535.5 983.5 V969.5" stroke="#c8404c" stroke-width="1.3"/><path d="M1533.2 971.3 L1535.5 967.5 L1537.8 971.3 Z" fill="#c8404c"/><path d="M1532.5 981.3 H1546.5" stroke="#7cc86c" stroke-width="1.3"/><path d="M1545.5 978.9 L1549.5 981.3 L1545.5 983.7 Z" fill="#7cc86c" fill-opacity="0.8" stroke="#7cc86c" stroke-width=".8"/><path d="M1571 971.5 H1575 L1576.5 969.0 H1581.5 L1583 971.5 H1587 V982.0 H1571 Z" fill="#1f3f7c"/><rect x="1572.5" y="969.9" width="2.4" height="1.6" fill="#1f3f7c"/><circle cx="1580.6" cy="977.5" r="3.3" fill="#1f3f7c" stroke="#f2f4fa" stroke-width="1.5"/><circle cx="1584.6" cy="973.5" r=".8" fill="#e8ecf6"/></svg>
<div style="position:absolute;left:0px;top:994px;width:1920px;height:4px;background:linear-gradient(#d4d4d4,#c4c4c4);"></div>
<div style="position:absolute;left:0px;top:998px;width:1920px;height:43px;background:#b9b9b9;"></div>
<div style="position:absolute;left:0px;top:1040px;width:1924px;height:1px;background:#2a2a2a;"></div>
<div class="sbtn" style="left:5px;top:1003px;width:112px;height:32px;border-color:#a5a5a5;background:linear-gradient(#ededed,#dcdcdc);"></div>
<div class="sbtn" style="left:126px;top:1003px;width:121px;height:32px;border-color:#a2a2a2;background:linear-gradient(#c9c9c9,#bdbdbd);box-shadow:none;"></div>
<svg width="1924" height="1041"><g fill="#3c3c3c"><rect x="21.7" y="1007.0999999999999" width="5.2" height="6" rx="1.4" transform="rotate(0 24.3 1018.8)"/><rect x="21.7" y="1007.0999999999999" width="5.2" height="6" rx="1.4" transform="rotate(45 24.3 1018.8)"/><rect x="21.7" y="1007.0999999999999" width="5.2" height="6" rx="1.4" transform="rotate(90 24.3 1018.8)"/><rect x="21.7" y="1007.0999999999999" width="5.2" height="6" rx="1.4" transform="rotate(135 24.3 1018.8)"/><rect x="21.7" y="1007.0999999999999" width="5.2" height="6" rx="1.4" transform="rotate(180 24.3 1018.8)"/><rect x="21.7" y="1007.0999999999999" width="5.2" height="6" rx="1.4" transform="rotate(225 24.3 1018.8)"/><rect x="21.7" y="1007.0999999999999" width="5.2" height="6" rx="1.4" transform="rotate(270 24.3 1018.8)"/><rect x="21.7" y="1007.0999999999999" width="5.2" height="6" rx="1.4" transform="rotate(315 24.3 1018.8)"/></g><circle cx="24.3" cy="1018.8" r="6.1" fill="none" stroke="#3c3c3c" stroke-width="6"/><g fill="#3c3c3c"><rect x="143.70000000000002" y="1007.0999999999999" width="5.2" height="6" rx="1.4" transform="rotate(0 146.3 1018.8)"/><rect x="143.70000000000002" y="1007.0999999999999" width="5.2" height="6" rx="1.4" transform="rotate(45 146.3 1018.8)"/><rect x="143.70000000000002" y="1007.0999999999999" width="5.2" height="6" rx="1.4" transform="rotate(90 146.3 1018.8)"/><rect x="143.70000000000002" y="1007.0999999999999" width="5.2" height="6" rx="1.4" transform="rotate(135 146.3 1018.8)"/><rect x="143.70000000000002" y="1007.0999999999999" width="5.2" height="6" rx="1.4" transform="rotate(180 146.3 1018.8)"/><rect x="143.70000000000002" y="1007.0999999999999" width="5.2" height="6" rx="1.4" transform="rotate(225 146.3 1018.8)"/><rect x="143.70000000000002" y="1007.0999999999999" width="5.2" height="6" rx="1.4" transform="rotate(270 146.3 1018.8)"/><rect x="143.70000000000002" y="1007.0999999999999" width="5.2" height="6" rx="1.4" transform="rotate(315 146.3 1018.8)"/></g><circle cx="146.3" cy="1018.8" r="6.1" fill="none" stroke="#3c3c3c" stroke-width="6"/></svg>
<div class="t" style="left:39.55px;top:1004.00px;font-size:12px;line-height:16px;color:#3c3c3c;letter-spacing:-0.123px;transform:scaleX(0.9000);transform-origin:0 50%;">JoyScope Mx1</div>
<div class="t" style="left:41.00px;top:1019.00px;font-size:12px;line-height:16px;color:#3c3c3c;transform:scaleX(0.9187);transform-origin:0 50%;">Disconnected</div>
<div class="t" style="left:161.60px;top:1004.00px;font-size:12px;line-height:16px;color:#4a4a4a;transform:scaleX(0.9066);transform-origin:0 50%;">JoyScope Mx50</div>
<div class="t" style="left:177.50px;top:1019.00px;font-size:12px;line-height:16px;color:#4a4a4a;letter-spacing:-0.375px;transform:scaleX(0.9000);transform-origin:0 50%;">SN: 30316</div>
<div style="position:absolute;left:1658px;top:1019px;width:27px;height:16px;box-sizing:border-box;border:1px solid #cdcdcd;background:#c8c8c8;"></div>
<div style="position:absolute;left:1659px;top:1020px;width:6px;height:14px;background:linear-gradient(180deg,#cfe3f6,#93c8f2);"></div>
<div class="t" style="left:1696.00px;top:1019.00px;font-size:12px;line-height:16px;color:#3a3a3a;letter-spacing:-0.339px;transform:scaleX(0.9000);transform-origin:0 50%;">22%</div>
<svg width="1924" height="1041"><g fill="none" stroke="#2f2f2f" stroke-width="2.4"><path d="M1742.5 1018.6 C1739.5 1020,1737.6 1022.5,1737.6 1026.5"/><path d="M1740.6 1034 C1743.6 1032.6,1745.4 1030,1745.4 1026.5"/></g><path d="M1733.6 1025.2 H1741.6 L1737.6 1030.6 Z M1741.4 1027.6 H1749.4 L1745.4 1022.2 Z" fill="#2f2f2f"/></svg>
<div class="t" style="left:1752.00px;top:1019.00px;font-size:12px;line-height:16px;color:#3a3a3a;letter-spacing:-0.514px;transform:scaleX(0.9000);transform-origin:0 50%;">9 FPS</div>
<div class="t" style="left:1843.00px;top:1019.00px;font-size:12px;line-height:16px;color:#3a3a3a;letter-spacing:-0.749px;transform:scaleX(0.9000);transform-origin:0 50%;">JS v3.1</div><div style="position:absolute;left:1110px;top:783px;width:710px;height:179px;background:#2d3c75;"></div>
<div style="position:absolute;left:1110px;top:783px;width:710px;height:20px;background:linear-gradient(#31427a,#2b3a70);"></div>
<div class="t" style="left:1118.00px;top:785.50px;font-size:11.5px;line-height:15px;color:#fff;font-weight:bold;letter-spacing:0.132px;">JoyScope Mx50 - 1.1</div>
<svg width="1924" height="1041"><path d="M1803.3 789.5 L1810.3 796.5 M1810.3 789.5 L1803.3 796.5" stroke="#ccd2f4" stroke-width="2"/></svg>
<div style="position:absolute;left:1114px;top:803px;width:702px;height:155px;background:linear-gradient(180deg,rgba(2,6,22,.8) 0px,rgba(2,6,22,.3) 9px,rgba(2,6,22,0) 20px),repeating-linear-gradient(45deg,#0c1a33 0px,#0c1a33 2.1px,#1d3454 2.6px,#1d3454 3.7px,#0c1a33 4.2px),#14243e;overflow:hidden;"></div>
<svg width="1924" height="1041"><defs><linearGradient id="sw" x1="0" y1="0" x2="0" y2="1"><stop offset="0" stop-color="#86abd0" stop-opacity=".27"/><stop offset=".4" stop-color="#7095bd" stop-opacity=".19"/><stop offset="1" stop-color="#4a78a8" stop-opacity=".05"/></linearGradient><filter id="swb" x="-5%" y="-20%" width="110%" height="140%"><feGaussianBlur stdDeviation="1.6"/></filter><clipPath id="bc"><rect x="1114" y="803" width="702" height="155"/></clipPath></defs><g clip-path="url(#bc)"><path filter="url(#swb)" d="M1108 804 C1150 811,1200 821,1230 826 C1280 834,1340 838,1399 851 C1440 858,1470 864,1492 868.5 C1530 873,1560 877,1567 878 C1600 886,1615 893,1626 897 C1660 906,1690 912,1707 915 C1750 920,1790 923,1822 925 V964 H1108 Z" fill="url(#sw)"/></g></svg>
<div class="t" style="left:1142.00px;top:813.50px;font-size:11px;line-height:15px;color:#fff;font-weight:bold;transform:scaleX(0.9350);transform-origin:0 50%;text-shadow:0 0 2px rgba(0,10,40,.8);">CHANNEL A</div>
<div class="t" style="left:1280.00px;top:813.50px;font-size:11px;line-height:15px;color:#fff;font-weight:bold;transform:scaleX(0.9213);transform-origin:0 50%;text-shadow:0 0 2px rgba(0,10,40,.8);">CHANNEL B</div>
<div class="t" style="left:1390.00px;top:813.50px;font-size:11px;line-height:15px;color:#fff;font-weight:bold;transform:scaleX(0.9525);transform-origin:0 50%;text-shadow:0 0 2px rgba(0,10,40,.8);">SAMPLING FREQUENCY</div>
<div class="t" style="left:1524.00px;top:813.50px;font-size:11px;line-height:15px;color:#fff;font-weight:bold;transform:scaleX(0.9676);transform-origin:0 50%;text-shadow:0 0 2px rgba(0,10,40,.8);">SIGNAL GENERATOR</div>
<div class="t" style="left:1646.00px;top:813.50px;font-size:11px;line-height:15px;color:#fff;font-weight:bold;transform:scaleX(0.9685);transform-origin:0 50%;text-shadow:0 0 2px rgba(0,10,40,.8);">DAQ MODE</div>
<div class="t" style="left:1746.00px;top:813.50px;font-size:11px;line-height:15px;color:#fff;font-weight:bold;letter-spacing:0.272px;text-shadow:0 0 2px rgba(0,10,40,.8);">STATUS</div>
<div class="pbtn" style="left:1799px;top:808px;width:15px;height:15px;border-radius:3px;"></div>
<div class="t" style="left:1803.45px;top:808.50px;font-size:10px;line-height:14px;color:#111;font-weight:bold;">?</div>
<div class="pbtn" style="left:1133px;top:837.5px;width:51px;height:17px;"></div>
<div class="t" style="left:1147.05px;top:838.80px;font-size:11px;line-height:15px;color:#111;transform:scaleX(0.9943);transform-origin:0 50%;">Auto</div>
<div class="pbtn" style="left:1281px;top:838px;width:51px;height:17px;"></div>
<div class="t" style="left:1295.05px;top:839.50px;font-size:11px;line-height:15px;color:#111;transform:scaleX(0.9943);transform-origin:0 50%;">Auto</div>
<div style="position:absolute;left:1187px;top:836px;width:13px;height:19px;box-sizing:border-box;border:1px solid #f3b6f6;background:#f012fb;"></div>
<div style="position:absolute;left:1335px;top:836px;width:13px;height:19px;box-sizing:border-box;border:1px solid #f6cf96;background:#f4a431;"></div>
<div class="t" style="left:1214.60px;top:822.30px;font-size:10.5px;line-height:14px;color:#bcd0ec;transform:scaleX(0.9323);transform-origin:0 50%;">AC</div>
<div class="t" style="left:1214.50px;top:859.30px;font-size:10.5px;line-height:14px;color:#bcd0ec;transform:scaleX(0.9099);transform-origin:0 50%;">DC</div>
<div class="t" style="left:1359.50px;top:822.30px;font-size:10.5px;line-height:14px;color:#bcd0ec;transform:scaleX(0.9323);transform-origin:0 50%;">AC</div>
<div class="t" style="left:1359.40px;top:859.30px;font-size:10.5px;line-height:14px;color:#bcd0ec;transform:scaleX(0.9099);transform-origin:0 50%;">DC</div>
<svg width="1924" height="1041"><defs><radialGradient id="kr" cx=".5" cy=".5" r=".5"><stop offset="0" stop-color="#fff" stop-opacity=".0"/><stop offset=".86" stop-color="#fff" stop-opacity="0"/><stop offset=".93" stop-color="#fff" stop-opacity=".35"/><stop offset="1" stop-color="#777" stop-opacity=".7"/></radialGradient><radialGradient id="pw" cx=".5" cy=".45" r=".55"><stop offset="0" stop-color="#04101c"/><stop offset=".6" stop-color="#0a1624"/><stop offset=".85" stop-color="#1d2a3c"/><stop offset="1" stop-color="#0a121e"/></radialGradient><linearGradient id="lev" x1="0" y1="0" x2="1" y2="0"><stop offset="0" stop-color="#6c675e"/><stop offset=".5" stop-color="#e8e2d2"/><stop offset="1" stop-color="#5c574e"/></linearGradient></defs><ellipse cx="1221.3" cy="847.0999999999999" rx="8.6" ry="8.2" fill="#15161a"/><ellipse cx="1221.1" cy="846.8" rx="7.2" ry="6.9" fill="none" stroke="#d2cdc2" stroke-width="2.4"/><ellipse cx="1221.7" cy="847.8" rx="5.2" ry="5" fill="#0a0a0c"/><path d="M1219.7 846.3 L1218.1 857.0 Q1220.1 860.0 1222.7 857.4 L1223.7 846.8 Q1221.7 844.8 1219.7 846.3 Z" fill="url(#lev)"/><circle cx="1220.1" cy="857.1999999999999" r="1.0" fill="#2a2824"/><ellipse cx="1366.2" cy="847.0999999999999" rx="8.6" ry="8.2" fill="#15161a"/><ellipse cx="1366.0" cy="846.8" rx="7.2" ry="6.9" fill="none" stroke="#d2cdc2" stroke-width="2.4"/><ellipse cx="1366.6000000000001" cy="847.8" rx="5.2" ry="5" fill="#0a0a0c"/><path d="M1364.6000000000001 846.3 L1363.0 857.0 Q1365.0 860.0 1367.6000000000001 857.4 L1368.6000000000001 846.8 Q1366.6000000000001 844.8 1364.6000000000001 846.3 Z" fill="url(#lev)"/><circle cx="1365.0" cy="857.1999999999999" r="1.0" fill="#2a2824"/><circle cx="1262.8" cy="850.3" r="12.1" fill="url(#pw)"/><circle cx="1262.8" cy="850.3" r="11.5" fill="none" stroke="#2a3446" stroke-width="1"/><path d="M1258.4 845.6 A6.3 6.3 0 1 0 1267.2 845.6" fill="none" stroke="#63b4d8" stroke-width="1.5" stroke-linecap="round"/><path d="M1262.8 841.5 V851.5" stroke="#8fd4f4" stroke-width="1.6" stroke-linecap="round"/></svg>
<div style="position:absolute;left:1154.3px;top:877.0px;width:48.8px;height:48.8px;border-radius:50%;background:conic-gradient(from 0deg,#f2f2f2 0deg,#dadada 25deg,#a6a6a6 58deg,#bdbdbd 80deg,#d6d6d6 100deg,#f0f0f0 125deg,#ffffff 150deg,#ececec 175deg,#c4c4c4 205deg,#a0a0a0 238deg,#b4b4b4 262deg,#d2d2d2 285deg,#f0f0f0 310deg,#ffffff 335deg,#f2f2f2 360deg);box-shadow:0 0 0 1.3px rgba(6,12,26,.75),0 1px 3px 1.5px rgba(0,0,0,.5), inset 0 0 0 1.6px rgba(250,250,250,.7), inset 0 0 3px 2.5px rgba(110,110,110,.55);"></div><div style="position:absolute;left:1166.5px;top:889.2px;width:24.4px;height:24.4px;border-radius:50%;background:radial-gradient(circle,rgba(228,228,228,.95),rgba(228,228,228,0) 70%);"></div><svg width="1924" height="1041"><path d="M1173.9 906.2 L1165.9 914.2" stroke="#a9c6ec" stroke-width="1.3" stroke-opacity=".95"/></svg>
<div style="position:absolute;left:1286.7px;top:877.4px;width:49.2px;height:49.2px;border-radius:50%;background:conic-gradient(from 0deg,#f2f2f2 0deg,#dadada 25deg,#a6a6a6 58deg,#bdbdbd 80deg,#d6d6d6 100deg,#f0f0f0 125deg,#ffffff 150deg,#ececec 175deg,#c4c4c4 205deg,#a0a0a0 238deg,#b4b4b4 262deg,#d2d2d2 285deg,#f0f0f0 310deg,#ffffff 335deg,#f2f2f2 360deg);box-shadow:0 0 0 1.3px rgba(6,12,26,.75),0 1px 3px 1.5px rgba(0,0,0,.5), inset 0 0 0 1.6px rgba(250,250,250,.7), inset 0 0 3px 2.5px rgba(110,110,110,.55);"></div><div style="position:absolute;left:1299.0px;top:889.7px;width:24.6px;height:24.6px;border-radius:50%;background:radial-gradient(circle,rgba(228,228,228,.95),rgba(228,228,228,0) 70%);"></div><svg width="1924" height="1041"><path d="M1308.4 895.8 L1303.6 885.5" stroke="#a9c6ec" stroke-width="1.3" stroke-opacity=".95"/></svg>
<div style="position:absolute;left:1425.0px;top:873.4px;width:50.4px;height:50.4px;border-radius:50%;background:conic-gradient(from 0deg,#f2f2f2 0deg,#dadada 25deg,#a6a6a6 58deg,#bdbdbd 80deg,#d6d6d6 100deg,#f0f0f0 125deg,#ffffff 150deg,#ececec 175deg,#c4c4c4 205deg,#a0a0a0 238deg,#b4b4b4 262deg,#d2d2d2 285deg,#f0f0f0 310deg,#ffffff 335deg,#f2f2f2 360deg);box-shadow:0 0 0 1.3px rgba(6,12,26,.75),0 1px 3px 1.5px rgba(0,0,0,.5), inset 0 0 0 1.6px rgba(250,250,250,.7), inset 0 0 3px 2.5px rgba(110,110,110,.55);"></div><div style="position:absolute;left:1437.6px;top:886.0px;width:25.2px;height:25.2px;border-radius:50%;background:radial-gradient(circle,rgba(228,228,228,.95),rgba(228,228,228,0) 70%);"></div><svg width="1924" height="1041"><path d="M1445.2 903.6 L1437.0 911.8" stroke="#a9c6ec" stroke-width="1.3" stroke-opacity=".95"/></svg>
<svg width="1924" height="1041"><circle cx="1178.4" cy="871.6" r="1.5" fill="#a6c6f0"/><circle cx="1162.5" cy="876.5" r="1.5" fill="#a6c6f0"/><circle cx="1194.6" cy="876.5" r="1.5" fill="#a6c6f0"/><circle cx="1151.5" cy="888.5" r="1.5" fill="#a6c6f0"/><circle cx="1205.5" cy="888.5" r="1.5" fill="#a6c6f0"/><circle cx="1148.5" cy="905.6" r="1.5" fill="#a6c6f0"/><circle cx="1208.5" cy="905.6" r="1.5" fill="#a6c6f0"/><circle cx="1155.5" cy="920.5" r="1.5" fill="#a6c6f0"/><circle cx="1201.6" cy="920.5" r="1.5" fill="#a6c6f0"/></svg><div class="t" style="left:1175.32px;top:855.90px;font-size:10px;line-height:14px;color:#fff;">5</div><div class="t" style="left:1155.12px;top:860.90px;font-size:10px;line-height:14px;color:#fff;">2</div><div class="t" style="left:1195.02px;top:860.90px;font-size:10px;line-height:14px;color:#fff;">8</div><div class="t" style="left:1140.72px;top:875.40px;font-size:10px;line-height:14px;color:#fff;">1</div><div class="t" style="left:1209.14px;top:877.70px;font-size:10px;line-height:14px;color:#fff;">10</div><div class="t" style="left:1128.95px;top:899.90px;font-size:10px;line-height:14px;color:#fff;">0,5</div><div class="t" style="left:1212.94px;top:899.60px;font-size:10px;line-height:14px;color:#fff;">20</div><div class="t" style="left:1138.05px;top:919.80px;font-size:10px;line-height:14px;color:#fff;">0,2</div><div class="t" style="left:1203.94px;top:919.80px;font-size:10px;line-height:14px;color:#fff;">30</div><div class="t" style="left:1168.40px;top:929.80px;font-size:10.5px;line-height:14px;color:#8cb4ea;">0,2V</div>
<svg width="1924" height="1041"><circle cx="1311.0" cy="872.2" r="1.5" fill="#a6c6f0"/><circle cx="1295.1" cy="877.1" r="1.5" fill="#a6c6f0"/><circle cx="1327.2" cy="877.1" r="1.5" fill="#a6c6f0"/><circle cx="1284.1" cy="889.1" r="1.5" fill="#a6c6f0"/><circle cx="1338.1" cy="889.1" r="1.5" fill="#a6c6f0"/><circle cx="1281.1" cy="906.2" r="1.5" fill="#a6c6f0"/><circle cx="1341.1" cy="906.2" r="1.5" fill="#a6c6f0"/><circle cx="1288.1" cy="921.1" r="1.5" fill="#a6c6f0"/><circle cx="1334.2" cy="921.1" r="1.5" fill="#a6c6f0"/></svg><div class="t" style="left:1307.92px;top:856.50px;font-size:10px;line-height:14px;color:#fff;">5</div><div class="t" style="left:1287.72px;top:861.50px;font-size:10px;line-height:14px;color:#fff;">2</div><div class="t" style="left:1327.62px;top:861.50px;font-size:10px;line-height:14px;color:#fff;">8</div><div class="t" style="left:1273.32px;top:876.00px;font-size:10px;line-height:14px;color:#fff;">1</div><div class="t" style="left:1341.74px;top:878.30px;font-size:10px;line-height:14px;color:#fff;">10</div><div class="t" style="left:1261.55px;top:900.50px;font-size:10px;line-height:14px;color:#fff;">0,5</div><div class="t" style="left:1345.54px;top:900.20px;font-size:10px;line-height:14px;color:#fff;">20</div><div class="t" style="left:1270.65px;top:920.40px;font-size:10px;line-height:14px;color:#fff;">0,2</div><div class="t" style="left:1336.54px;top:920.40px;font-size:10px;line-height:14px;color:#fff;">30</div><div class="t" style="left:1305.38px;top:930.40px;font-size:10.5px;line-height:14px;color:#8cb4ea;">2V</div>
<svg width="1924" height="1041"><circle cx="1428.6" cy="920.2" r="1.4" fill="#a6c6f0"/><circle cx="1422.0" cy="910.3" r="1.2" fill="#6f8db5"/><circle cx="1419.7" cy="898.6" r="1.4" fill="#a6c6f0"/><circle cx="1422.0" cy="886.9" r="1.2" fill="#6f8db5"/><circle cx="1428.6" cy="877.0" r="1.4" fill="#a6c6f0"/><circle cx="1438.5" cy="870.4" r="1.2" fill="#6f8db5"/><circle cx="1450.2" cy="868.1" r="1.4" fill="#a6c6f0"/><circle cx="1461.9" cy="870.4" r="1.2" fill="#6f8db5"/><circle cx="1471.8" cy="877.0" r="1.4" fill="#a6c6f0"/><circle cx="1478.4" cy="886.9" r="1.2" fill="#6f8db5"/><circle cx="1480.7" cy="898.6" r="1.4" fill="#a6c6f0"/><circle cx="1478.4" cy="910.3" r="1.2" fill="#6f8db5"/><circle cx="1471.8" cy="920.2" r="1.4" fill="#a6c6f0"/></svg>
<div class="t" style="left:1450.22px;top:855.00px;font-size:10px;line-height:14px;color:#fff;">3</div>
<div class="t" style="left:1414.66px;top:863.70px;font-size:10px;line-height:14px;color:#fff;">750</div>
<div class="t" style="left:1473.44px;top:868.00px;font-size:10px;line-height:14px;color:#fff;">12</div>
<div class="t" style="left:1398.66px;top:890.60px;font-size:10px;line-height:14px;color:#fff;">300</div>
<div class="t" style="left:1483.24px;top:890.60px;font-size:10px;line-height:14px;color:#fff;">24</div>
<div class="t" style="left:1409.06px;top:918.60px;font-size:10px;line-height:14px;color:#fff;">120</div>
<div class="t" style="left:1472.94px;top:918.60px;font-size:10px;line-height:14px;color:#fff;">48</div>
<div class="t" style="left:1435.80px;top:929.00px;font-size:10.5px;line-height:14px;color:#8cb4ea;letter-spacing:-0.193px;transform:scaleX(0.9000);transform-origin:0 50%;">120kHz</div>
<div class="t" style="left:1484.00px;top:854.40px;font-size:8.5px;line-height:12px;color:#8fb2ec;font-weight:bold;transform:scaleX(0.9470);transform-origin:0 50%;">Pipe</div>
<div class="pbtn" style="left:1148px;top:943.5px;width:67px;height:14px;border-radius:4px;background:linear-gradient(#fff,#ececec);"></div>
<div class="t" style="left:1161.70px;top:943.30px;font-size:11.5px;line-height:15px;color:#111;letter-spacing:-0.092px;transform:scaleX(0.9000);transform-origin:0 50%;">LP Filter</div>
<div class="pbtn" style="left:1280.5px;top:943.5px;width:67px;height:14px;border-radius:4px;background:linear-gradient(#fff,#ececec);"></div>
<div class="t" style="left:1294.50px;top:943.30px;font-size:11.5px;line-height:15px;color:#111;letter-spacing:-0.092px;transform:scaleX(0.9000);transform-origin:0 50%;">LP Filter</div>
<div class="t" style="left:1526.00px;top:855.10px;font-size:11px;line-height:15px;color:#eef2fa;transform:scaleX(0.9156);transform-origin:0 50%;">Signal</div>
<div class="t" style="left:1528.00px;top:879.20px;font-size:11px;line-height:15px;color:#eef2fa;transform:scaleX(0.9104);transform-origin:0 50%;">Ampl.</div>
<div class="t" style="left:1528.00px;top:903.00px;font-size:11px;line-height:15px;color:#eef2fa;transform:scaleX(0.9970);transform-origin:0 50%;">Freq.</div>
<div style="position:absolute;left:1561px;top:853px;width:44px;height:21px;box-sizing:border-box;border:1px solid #8e98a8;background:#fff;box-shadow:inset 1px 1px 0 #cfd4dc;"></div><div style="position:absolute;left:1587px;top:855px;width:16px;height:17px;background:linear-gradient(#fbfbfb,#e2e2e2);border-left:1px solid #d9d9d9;"></div><svg width="1924" height="1041"><path d="M1591.5 862 H1598.5 L1595 866 Z" fill="#111"/></svg><div class="t" style="left:1565.50px;top:856.00px;font-size:11px;line-height:15px;color:#111;transform:scaleX(0.9084);transform-origin:0 50%;">Sine</div>
<div style="position:absolute;left:1561px;top:877px;width:44px;height:21px;box-sizing:border-box;border:1px solid #8e98a8;background:#fff;box-shadow:inset 1px 1px 0 #cfd4dc;"></div><div style="position:absolute;left:1587px;top:879px;width:16px;height:17px;background:linear-gradient(#fbfbfb,#e2e2e2);border-left:1px solid #d9d9d9;"></div><svg width="1924" height="1041"><path d="M1591.5 886 H1598.5 L1595 890 Z" fill="#111"/></svg><div class="t" style="left:1565.50px;top:880.00px;font-size:11px;line-height:15px;color:#111;transform:scaleX(0.9262);transform-origin:0 50%;">100</div>
<div style="position:absolute;left:1561px;top:902px;width:44px;height:21px;box-sizing:border-box;border:1px solid #8e98a8;background:#fff;box-shadow:inset 1px 1px 0 #cfd4dc;"></div>
<div class="t" style="left:1579.50px;top:905.80px;font-size:11px;line-height:15px;color:#111;letter-spacing:0.147px;">60,0</div>
<div class="t" style="left:1607.00px;top:879.20px;font-size:11px;line-height:15px;color:#eef2fa;">%</div>
<div class="t" style="left:1607.00px;top:903.00px;font-size:11px;line-height:15px;color:#eef2fa;letter-spacing:-0.056px;transform:scaleX(0.9000);transform-origin:0 50%;">Hz</div>
<div class="pbtn" style="left:1562.5px;top:927.5px;width:41.5px;height:17px;background:linear-gradient(#e9e9e9,#cdcdcd);"></div>
<div class="t" style="left:1571.95px;top:929.10px;font-size:11px;line-height:15px;color:#111;transform:scaleX(0.9943);transform-origin:0 50%;">Stop</div>
<div class="pbtn" style="left:1646px;top:865px;width:64px;height:21.5px;background:linear-gradient(#dcdcdc,#c4c4c4);"></div>
<div class="t" style="left:1657.50px;top:869.50px;font-size:10.5px;line-height:14px;color:#111;transform:scaleX(0.9368);transform-origin:0 50%;">ANALOG</div>
<div class="pbtn" style="left:1646px;top:897px;width:64px;height:21.5px;background:linear-gradient(#fdfdfd,#e6e6e6);"></div>
<div class="t" style="left:1657.50px;top:901.70px;font-size:10.5px;line-height:14px;color:#111;transform:scaleX(0.9984);transform-origin:0 50%;">DIGITAL</div>
<div class="t" style="left:1732.00px;top:851.50px;font-size:11px;line-height:15px;color:#fff;font-weight:bold;letter-spacing:0.307px;">Connected</div>
<div class="t" style="left:1732.00px;top:871.00px;font-size:10.5px;line-height:14px;color:#eef2fa;letter-spacing:0.096px;">S/N: 30316</div>
<div class="t" style="left:1732.00px;top:888.50px;font-size:10.5px;line-height:14px;color:#eef2fa;letter-spacing:0.262px;">FW: 1.18</div></body></html>
